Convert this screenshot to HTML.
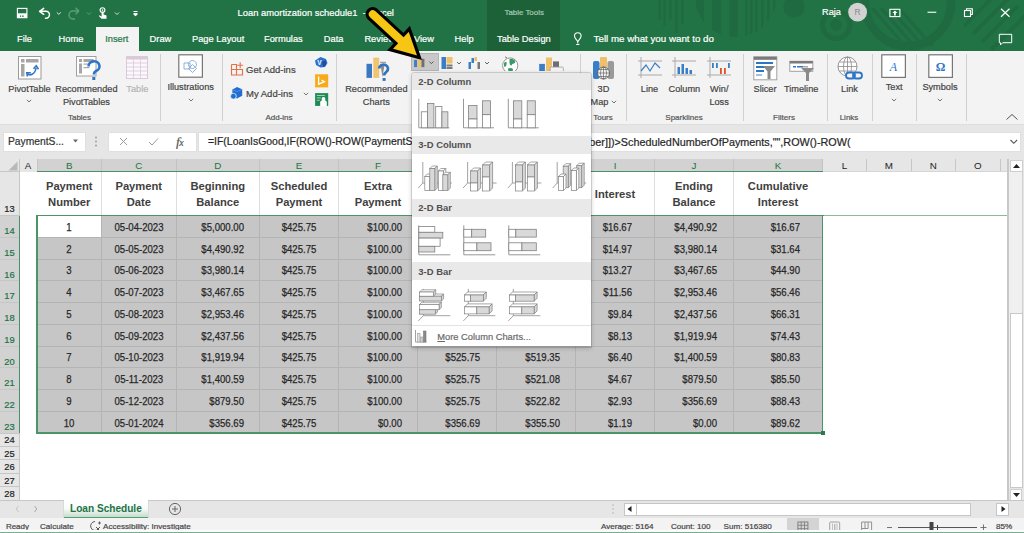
<!DOCTYPE html><html><head><meta charset="utf-8"><style>
html,body{margin:0;padding:0;width:1024px;height:533px;overflow:hidden;background:#fff;}
body{position:relative;font-family:"Liberation Sans",sans-serif;}
.t{position:absolute;white-space:nowrap;}
.n{-webkit-text-stroke:0.2px currentColor;}
.r{position:absolute;}
.s{position:absolute;overflow:visible;}
</style></head><body>
<div class="r" style="left:0px;top:0px;width:1024px;height:51px;background:#217346;"></div>
<div class="r" style="left:487.2px;top:0px;width:73.00000000000006px;height:51px;background:#1d6139;"></div>
<svg class="s" style="left:640px;top:0px;" width="384" height="51" viewBox="0 0 384 51"><rect x="18.5" y="0" width="2.5" height="19.5" fill="#1f6a40"/><rect x="23.399999999999977" y="0" width="2.2000000000000455" height="26.4" fill="#1f6a40"/><rect x="29.299999999999955" y="0" width="2.2000000000000455" height="19.5" fill="#1f6a40"/><rect x="35" y="0" width="2.5" height="33" fill="#1f6a40"/><rect x="41" y="0" width="2.6000000000000227" height="24.4" fill="#1f6a40"/><defs><clipPath id="hc"><circle cx="95.7" cy="-4" r="41"/></clipPath></defs><g clip-path="url(#hc)"><rect x="56" y="0" width="8" height="60" fill="#1f6a40"/><rect x="72" y="0" width="9" height="60" fill="#1f6a40"/><rect x="89.5" y="0" width="8.5" height="60" fill="#1f6a40"/><rect x="105" y="0" width="2.5" height="60" fill="#1f6a40"/><rect x="110" y="0" width="2.5" height="60" fill="#1f6a40"/><rect x="115" y="0" width="2.5" height="60" fill="#1f6a40"/><rect x="121" y="0" width="2.5" height="60" fill="#1f6a40"/><rect x="127" y="0" width="2.5" height="60" fill="#1f6a40"/><rect x="133" y="0" width="2.5" height="60" fill="#1f6a40"/></g><circle cx="154" cy="6.8" r="10.7" fill="#1f6a40"/><circle cx="196.10000000000002" cy="24.9" r="13.6" fill="none" stroke="#1f6a40" stroke-width="5"/><circle cx="196.10000000000002" cy="24.9" r="5.9" fill="#1f6a40"/><circle cx="268" cy="3" r="43" fill="none" stroke="#1f6a40" stroke-width="8.5"/><line x1="232" y1="8" x2="265" y2="46" stroke="#1f6a40" stroke-width="3"/><line x1="241" y1="8" x2="274" y2="46" stroke="#1f6a40" stroke-width="3"/><line x1="250" y1="8" x2="283" y2="46" stroke="#1f6a40" stroke-width="3"/><line x1="259" y1="8" x2="292" y2="46" stroke="#1f6a40" stroke-width="3"/><line x1="324" y1="26" x2="360" y2="-10" stroke="#1f6a40" stroke-width="3.5"/><line x1="333" y1="34" x2="369" y2="-2" stroke="#1f6a40" stroke-width="3.5"/><line x1="342" y1="42" x2="378" y2="6" stroke="#1f6a40" stroke-width="3.5"/><line x1="351" y1="50" x2="387" y2="14" stroke="#1f6a40" stroke-width="3.5"/></svg>
<svg class="s" style="left:15px;top:6px;" width="140" height="16" viewBox="0 0 140 16"><rect x="2.4" y="2.4" width="9.5" height="9.3" fill="none" stroke="#fff" stroke-width="1.1"/><rect x="2.4" y="7.3" width="9.5" height="4.4" fill="#fff"/><rect x="5" y="9.5" width="1.2" height="1.3" fill="#217346"/><rect x="7.2" y="9.5" width="1.5" height="1.3" fill="#217346"/><path d="M24.6 5.3 L28.7 2.4 M24.6 5.3 L28.7 8.3 M24.6 5.3 H31 A3.45 3.45 0 0 1 31 12.2 H30.5" fill="none" stroke="#fff" stroke-width="1.5" stroke-linecap="round"/><path d="M41.8 6.4 l2 1.9 l2 -1.9" fill="none" stroke="#e8e8e8" stroke-width="1"/><path d="M64 5 L60.5 1.8 M64 5 L60.5 8.2 M64 5 H58 A4 4 0 0 0 58 13 H60" fill="none" stroke="#5f9c7a" stroke-width="1.5"/><path d="M72 6.5 l2 2 l2 -2" fill="none" stroke="#5f9c7a" stroke-width="1"/><circle cx="87.5" cy="4.1" r="2.4" fill="none" stroke="#fff" stroke-width="1.1"/><circle cx="87.5" cy="4.1" r="0.8" fill="#fff"/><path d="M86.6 5.5 V10.5 L84.2 9.2 L83.9 10 L86.5 12.8 H91.5 V9.5 L88.6 8.6 V5.5 Z" fill="#fff"/><path d="M100 6.5 l2 2 l2 -2" fill="none" stroke="#e0e0e0" stroke-width="1"/><rect x="118.5" y="5" width="4" height="1" fill="#fff"/><path d="M118.5 7 h4 v1.5 l-2 1.7 l-2 -1.7z" fill="#fff"/></svg>
<div class="t n" style="left:237.60px;top:7.54px;font-size:9.4px;line-height:9.4px;color:#ffffff;font-weight:normal;">Loan amortization schedule1&nbsp; -&nbsp; Excel</div>
<div class="t n" style="left:504.50px;top:8.91px;font-size:7.9px;line-height:7.9px;color:#a9c9b4;font-weight:normal;">Table Tools</div>
<div class="t n" style="left:822.00px;top:7.81px;font-size:9.2px;line-height:9.2px;color:#ffffff;font-weight:normal;">Raja</div>
<svg class="s" style="left:846px;top:2px;" width="24" height="22" viewBox="0 0 24 22"><circle cx="11.6" cy="10.2" r="9.4" fill="#d2d2d2"/><text x="11.6" y="13.3" font-size="8.5" text-anchor="middle" fill="#8a8a8a" font-family="Liberation Sans">R</text></svg>
<svg class="s" style="left:885px;top:5px;" width="135" height="15" viewBox="0 0 135 15"><rect x="4.9" y="4.3" width="10" height="7.3" fill="none" stroke="#fff" stroke-width="1.1"/><path d="M9.9 5.5 l-2.5 2.5 h1.6 v2.5 h1.8 v-2.5 h1.6z" fill="#fff"/><rect x="42.5" y="6.7" width="8.8" height="1.1" fill="#fff"/><rect x="79.5" y="5.5" width="6" height="6" fill="none" stroke="#fff" stroke-width="1.1"/><path d="M81.5 5.5 v-1.8 h5.8 v5.8 h-1.8" fill="none" stroke="#fff" stroke-width="1.1"/><path d="M116 3.8 l8.5 8 M124.5 3.8 l-8.5 8" stroke="#fff" stroke-width="1.2"/></svg>
<svg class="s" style="left:996px;top:31px;" width="18" height="16" viewBox="0 0 18 16"><path d="M3.3 3.3 h12.4 v8.4 h-9 l-2.2 2.2 v-2.2 h-1.2z" fill="none" stroke="#fff" stroke-width="1"/></svg>
<div class="r" style="left:95.5px;top:27px;width:43.0px;height:24px;background:#f3f3f3;border-radius:0"></div>
<div class="t n" style="left:17.00px;top:34.63px;font-size:9.3px;line-height:9.3px;color:#ffffff;font-weight:normal;">File</div>
<div class="t n" style="left:58.50px;top:34.63px;font-size:9.3px;line-height:9.3px;color:#ffffff;font-weight:normal;">Home</div>
<div class="t n" style="left:149.60px;top:34.63px;font-size:9.3px;line-height:9.3px;color:#ffffff;font-weight:normal;">Draw</div>
<div class="t n" style="left:192.00px;top:34.63px;font-size:9.3px;line-height:9.3px;color:#ffffff;font-weight:normal;">Page Layout</div>
<div class="t n" style="left:264.00px;top:34.63px;font-size:9.3px;line-height:9.3px;color:#ffffff;font-weight:normal;">Formulas</div>
<div class="t n" style="left:323.80px;top:34.63px;font-size:9.3px;line-height:9.3px;color:#ffffff;font-weight:normal;">Data</div>
<div class="t n" style="left:364.40px;top:34.63px;font-size:9.3px;line-height:9.3px;color:#ffffff;font-weight:normal;">Review</div>
<div class="t n" style="left:414.00px;top:34.63px;font-size:9.3px;line-height:9.3px;color:#ffffff;font-weight:normal;">View</div>
<div class="t n" style="left:454.60px;top:34.63px;font-size:9.3px;line-height:9.3px;color:#ffffff;font-weight:normal;">Help</div>
<div class="t n" style="left:497.00px;top:34.63px;font-size:9.3px;line-height:9.3px;color:#ffffff;font-weight:normal;">Table Design</div>
<div class="t n" style="left:593.60px;top:34.25px;font-size:9.75px;line-height:9.75px;color:#ffffff;font-weight:normal;">Tell me what you want to do</div>
<div class="t n" style="left:105.20px;top:34.63px;font-size:9.3px;line-height:9.3px;color:#217346;font-weight:normal;">Insert</div>
<svg class="s" style="left:571px;top:31px;" width="14" height="16" viewBox="0 0 14 16"><path d="M6.8 12.5 v-1.5 c0-1.6 -3.3-3.2 -3.3-6 a3.3 3.3 0 0 1 6.6 0 c0 2.8 -3.3 4.4 -3.3 6 v1.5" fill="none" stroke="#fff" stroke-width="1.1"/><rect x="5.2" y="13" width="3.2" height="1" fill="#fff"/></svg>
<div class="r" style="left:0px;top:51px;width:1024px;height:72.5px;background:#f3f3f3;"></div>
<div class="r" style="left:0px;top:123.5px;width:1024px;height:1.0px;background:#dedede;"></div>
<div class="r" style="left:0px;top:124.5px;width:1024px;height:34.5px;background:#e6e6e6;"></div>
<div class="r" style="left:159.7px;top:54px;width:1.0px;height:66.5px;background:#d0d0d0;"></div>
<div class="r" style="left:222.2px;top:54px;width:1.0px;height:66.5px;background:#d0d0d0;"></div>
<div class="r" style="left:336.2px;top:54px;width:1.0px;height:66.5px;background:#d0d0d0;"></div>
<div class="r" style="left:580.2px;top:54px;width:1.0px;height:66.5px;background:#d0d0d0;"></div>
<div class="r" style="left:626.4px;top:54px;width:1.0px;height:66.5px;background:#d0d0d0;"></div>
<div class="r" style="left:742.5px;top:54px;width:1.0px;height:66.5px;background:#d0d0d0;"></div>
<div class="r" style="left:826.6px;top:54px;width:1.0px;height:66.5px;background:#d0d0d0;"></div>
<div class="r" style="left:872.2px;top:54px;width:1.0px;height:66.5px;background:#d0d0d0;"></div>
<div class="r" style="left:915.6px;top:54px;width:1.0px;height:66.5px;background:#d0d0d0;"></div>
<div class="r" style="left:965.6px;top:54px;width:1.0px;height:66.5px;background:#d0d0d0;"></div>
<div class="t n" style="left:-120.50px;width:400px;text-align:center;top:114.13px;font-size:8.0px;line-height:8.0px;color:#555;font-weight:normal;">Tables</div>
<div class="t n" style="left:79.00px;width:400px;text-align:center;top:114.13px;font-size:8.0px;line-height:8.0px;color:#555;font-weight:normal;">Add-ins</div>
<div class="t n" style="left:403.00px;width:400px;text-align:center;top:114.13px;font-size:8.0px;line-height:8.0px;color:#555;font-weight:normal;">Tours</div>
<div class="t n" style="left:484.00px;width:400px;text-align:center;top:114.13px;font-size:8.0px;line-height:8.0px;color:#555;font-weight:normal;">Sparklines</div>
<div class="t n" style="left:584.00px;width:400px;text-align:center;top:114.13px;font-size:8.0px;line-height:8.0px;color:#555;font-weight:normal;">Filters</div>
<div class="t n" style="left:649.00px;width:400px;text-align:center;top:114.13px;font-size:8.0px;line-height:8.0px;color:#555;font-weight:normal;">Links</div>
<div class="t n" style="left:-170.50px;width:400px;text-align:center;top:85.21px;font-size:9.2px;line-height:9.2px;color:#444444;font-weight:normal;">PivotTable</div>
<svg class="s" style="left:26.4px;top:99px;" width="6" height="4" viewBox="0 0 6 4"><path d="M0.8 0.8 L3 3 L5.2 0.8" fill="none" stroke="#666" stroke-width="0.9"/></svg>
<svg class="s" style="left:18px;top:56px;" width="24" height="24" viewBox="0 0 24 24"><rect x="0.5" y="0.5" width="22.5" height="22.5" fill="#fff" stroke="#9a9a9a"/><rect x="3" y="3" width="3.5" height="3.5" fill="#a6a6a6"/><rect x="8" y="3" width="12.5" height="3.5" fill="#a6a6a6"/><rect x="3" y="8" width="3.5" height="12.5" fill="#a6a6a6"/><path d="M9.5 17.5 C11.5 20 17 19 18 12" fill="none" stroke="#2e75c8" stroke-width="1.6"/><path d="M15.5 12.8 L18.2 9.8 L20.5 13.2" fill="none" stroke="#2e75c8" stroke-width="1.6"/><path d="M9.5 20.5 L8.8 16.8 L12.8 16.8" fill="none" stroke="#2e75c8" stroke-width="1.6"/></svg>
<div class="t n" style="left:-113.60px;width:400px;text-align:center;top:85.21px;font-size:9.2px;line-height:9.2px;color:#444444;font-weight:normal;">Recommended</div>
<div class="t n" style="left:-113.60px;width:400px;text-align:center;top:98.31px;font-size:9.2px;line-height:9.2px;color:#444444;font-weight:normal;">PivotTables</div>
<svg class="s" style="left:76px;top:56px;" width="26" height="27" viewBox="0 0 26 27"><rect x="0.5" y="0.5" width="19.5" height="19.5" fill="#fff" stroke="#a0a0a0"/><rect x="3" y="3" width="3" height="3" fill="#a6a6a6"/><rect x="7.5" y="3" width="10" height="3" fill="#a6a6a6"/><rect x="3" y="7.5" width="3" height="10" fill="#a6a6a6"/><rect x="7.5" y="7.5" width="6" height="1.2" fill="#a6a6a6"/><rect x="7.5" y="11" width="6" height="1.2" fill="#a6a6a6"/><path d="M12.5 10.5 a5.5 5 0 1 1 7.5 4.5 c-1.5 0.8 -2.2 1.6 -2.2 3.5" fill="none" stroke="#2e75c8" stroke-width="2.6"/><rect x="16.3" y="21" width="3" height="3" fill="#2e75c8"/></svg>
<div class="t n" style="left:-62.70px;width:400px;text-align:center;top:85.21px;font-size:9.2px;line-height:9.2px;color:#b4b4b4;font-weight:normal;">Table</div>
<svg class="s" style="left:126px;top:56px;" width="23" height="24" viewBox="0 0 23 24"><rect x="0.5" y="0.5" width="21" height="22" fill="#fbf7fb" stroke="#d9c9d9"/><rect x="0.5" y="0.5" width="21" height="3" fill="#d9c9d9"/><line x1="0.5" y1="7" x2="21.5" y2="7" stroke="#dcc8dc" stroke-width="0.8"/><line x1="0.5" y1="11" x2="21.5" y2="11" stroke="#dcc8dc" stroke-width="0.8"/><line x1="0.5" y1="15" x2="21.5" y2="15" stroke="#dcc8dc" stroke-width="0.8"/><line x1="0.5" y1="19" x2="21.5" y2="19" stroke="#dcc8dc" stroke-width="0.8"/><line x1="7.5" y1="0.5" x2="7.5" y2="22.5" stroke="#dcc8dc" stroke-width="0.8"/><line x1="14.5" y1="0.5" x2="14.5" y2="22.5" stroke="#dcc8dc" stroke-width="0.8"/></svg>
<svg class="s" style="left:178px;top:54px;" width="26" height="25" viewBox="0 0 26 25"><rect x="0.8" y="0.8" width="23.6" height="22.4" fill="#fff" stroke="#767676" stroke-width="1.2"/><path d="M6 9 h6 v6 h-6z M14.5 6.5 a4 4 0 1 1 -0.1 0 M10.5 14.5 l4 -4 l4 4 l-4 4z" fill="none" stroke="#7fa7d8" stroke-width="0.9"/></svg>
<div class="t n" style="left:-9.40px;width:400px;text-align:center;top:83.41px;font-size:9.2px;line-height:9.2px;color:#444444;font-weight:normal;">Illustrations</div>
<svg class="s" style="left:188px;top:97.6px;" width="6" height="4" viewBox="0 0 6 4"><path d="M0.8 0.8 L3 3 L5.2 0.8" fill="none" stroke="#666" stroke-width="0.9"/></svg>
<svg class="s" style="left:230px;top:61px;" width="15" height="15" viewBox="0 0 15 15"><path d="M1.5 8.5 v5.5 h11 v-5.5 h-11 M1.5 3.5 h5 v10.5 M1.5 3.5 v5" fill="none" stroke="#e2714a" stroke-width="1.1"/><path d="M10.2 1.2 v6 M7.2 4.2 h6" stroke="#e2714a" stroke-width="1.1"/></svg>
<div class="t n" style="left:246.00px;top:64.96px;font-size:9.5px;line-height:9.5px;color:#444444;font-weight:normal;">Get Add-ins</div>
<svg class="s" style="left:230px;top:86px;" width="14" height="14" viewBox="0 0 14 14"><path d="M7 1 l5.2 2.2 v6.6 l-5.2 2.6 l-4.6 -2.2 v-6.8z" fill="#1e6fd1"/><path d="M2.4 3.4 l4.6 2.2 l5.2 -2.4" fill="none" stroke="#6aa3ea" stroke-width="0.6"/><circle cx="3.4" cy="10.2" r="2.9" fill="#1e6fd1" stroke="#f3f3f3" stroke-width="0.8"/></svg>
<div class="t n" style="left:246.00px;top:88.96px;font-size:9.5px;line-height:9.5px;color:#444444;font-weight:normal;">My Add-ins</div>
<svg class="s" style="left:303px;top:92px;" width="6" height="4" viewBox="0 0 6 4"><path d="M0.8 0.8 L3 3 L5.2 0.8" fill="none" stroke="#666" stroke-width="0.9"/></svg>
<svg class="s" style="left:314px;top:56px;" width="15" height="51" viewBox="0 0 15 51"><path d="M6.5 1 l5.5 2 l1.5 4 l-2.5 4 l-4.5 0.5 l-4.5 -2.5 l-1 -4.5z" fill="#2b6fd0"/><path d="M8 6 l4 -2 v5 l-3 2z" fill="#1d4f9e"/><text x="5.3" y="8.8" font-size="6.5" font-weight="bold" fill="#fff" font-family="Liberation Sans" text-anchor="middle">V</text><rect x="1.1" y="18.3" width="13.1" height="13.1" fill="#f7ab1b"/><path d="M4.6 20.6 v7.6 l5.8 -2.6 l-3 -1.6" fill="none" stroke="#fff" stroke-width="1.3"/><rect x="1.1" y="37.1" width="13.1" height="12.8" fill="#1f8a55"/><circle cx="9.5" cy="43" r="1.9" fill="#fff"/><path d="M6.2 49.9 v-3.3 a3.3 2.6 0 0 1 6.6 0 v3.3z" fill="#fff"/><rect x="2.8" y="39.2" width="8" height="0.8" fill="#bfe0cc"/><rect x="2.8" y="41.5" width="4" height="0.8" fill="#bfe0cc"/><rect x="2.8" y="43.8" width="3" height="0.8" fill="#bfe0cc"/></svg>
<svg class="s" style="left:365px;top:56px;" width="26" height="26" viewBox="0 0 26 26"><rect x="1.5" y="7.8" width="5.5" height="14.1" fill="#3a78c2"/><rect x="8.3" y="1.6" width="5.9" height="20.3" fill="#efc473"/><rect x="15" y="5.8" width="6" height="1" fill="#8a8a8a"/><path d="M15.5 9 l4 0 l-2 12z" fill="#8a8a8a"/><path d="M14.2 12.6 a4.4 4.1 0 1 1 7.2 3.2 c-1.6 1.1 -2.3 1.9 -2.3 3.7" fill="none" stroke="#3273c0" stroke-width="2.7"/><rect x="17.6" y="22" width="3" height="2.9" fill="#3273c0"/></svg>
<div class="t n" style="left:176.40px;width:400px;text-align:center;top:85.21px;font-size:9.2px;line-height:9.2px;color:#444444;font-weight:normal;">Recommended</div>
<div class="t n" style="left:176.40px;width:400px;text-align:center;top:98.31px;font-size:9.2px;line-height:9.2px;color:#444444;font-weight:normal;">Charts</div>
<div class="r" style="left:410.9px;top:53.2px;width:27.700000000000045px;height:18.0px;background:#c8c8c8;box-sizing:border-box;border:1px solid #b4b4b4"></div>
<svg class="s" style="left:413px;top:56px;" width="24" height="14" viewBox="0 0 24 14"><rect x="1.1" y="3.9" width="2.9" height="7.2" fill="#3a7ec7"/><rect x="4.7" y="0" width="3.3" height="11.1" fill="#efc06a"/><rect x="8.5" y="2.8" width="2.9" height="8.3" fill="#6f6f6f"/><path d="M16.4 5.6 l2 2 l2 -2" fill="none" stroke="#555" stroke-width="1"/></svg>
<svg class="s" style="left:440px;top:56px;" width="52" height="15" viewBox="0 0 52 15"><rect x="1.5" y="1" width="4.5" height="12" fill="#3a7ec7"/><rect x="6.5" y="1" width="6" height="6.5" fill="#efc06a"/><rect x="6.5" y="8.5" width="6" height="2" fill="#7a7a7a"/><rect x="6.5" y="11" width="6" height="2" fill="#7a7a7a"/><path d="M17 6 l2 2 l2 -2" fill="none" stroke="#555" stroke-width="0.9"/><rect x="28.5" y="6" width="2.5" height="7" fill="#3a7ec7"/><rect x="31.5" y="2" width="2.5" height="5" fill="#3a7ec7"/><rect x="34.5" y="1" width="2.5" height="4" fill="#efc06a"/><rect x="37.5" y="6" width="2.5" height="7" fill="#7a7a7a"/><path d="M45 6 l2 2 l2 -2" fill="none" stroke="#555" stroke-width="0.9"/></svg>
<svg class="s" style="left:500px;top:55px;" width="65" height="17" viewBox="0 0 65 17"><defs><clipPath id="gl"><rect x="0" y="0" width="65" height="16"/></clipPath></defs><g clip-path="url(#gl)"><circle cx="10.2" cy="10.5" r="7.6" fill="#fff" stroke="#8a8a8a" stroke-width="0.9"/><path d="M5 1.8 l2 1.2" stroke="#555" stroke-width="0.8"/><path d="M9.5 4 q3 -1 5.5 1.5 q1 2 -1 3 q-2 0 -2.5 2 q-2 0 -2 -2.5z M4 8 q1 -1.5 2.5 -1 q0.5 2 -0.5 4 q-1 1 -2 0.5z M8 13.5 q3 -1 5 0.5 l-0.5 3 h-4z" fill="#3c9a6a"/><rect x="39.2" y="8.9" width="5.7" height="8" fill="#3a7ec7"/><rect x="46" y="2.5" width="6" height="14" fill="#efc06a"/><rect x="53" y="6.4" width="6" height="8" fill="#6f6f6f"/><rect x="50.2" y="12.1" width="13.2" height="5" rx="1" fill="#f3f3f3" stroke="#a0a0a0" stroke-width="0.8"/></g></svg>
<svg class="s" style="left:592px;top:56px;" width="24" height="25" viewBox="0 0 24 25"><rect x="1" y="5" width="6.5" height="18" rx="2" fill="#3a7ec7"/><rect x="8" y="1" width="7" height="18" rx="1" fill="#efc06a"/><rect x="15.5" y="5" width="6.5" height="18" rx="2" fill="#9a9a9a"/><circle cx="11.5" cy="17" r="6" fill="#f3f3f3" stroke="#555" stroke-width="0.8"/><path d="M5.5 17 h12 M11.5 11 v12 M7 13.5 h9 M7 20.5 h9" stroke="#555" stroke-width="0.6"/><ellipse cx="11.5" cy="17" rx="3" ry="6" fill="none" stroke="#555" stroke-width="0.6"/></svg>
<div class="t n" style="left:403.40px;width:400px;text-align:center;top:85.21px;font-size:9.2px;line-height:9.2px;color:#444444;font-weight:normal;">3D</div>
<div class="t n" style="left:399.50px;width:400px;text-align:center;top:98.31px;font-size:9.2px;line-height:9.2px;color:#444444;font-weight:normal;">Map</div>
<svg class="s" style="left:611.4px;top:99.8px;" width="6" height="4" viewBox="0 0 6 4"><path d="M0.8 0.8 L3 3 L5.2 0.8" fill="none" stroke="#666" stroke-width="0.9"/></svg>
<svg class="s" style="left:637px;top:56px;" width="26" height="23" viewBox="0 0 26 23"><line x1="1" y1="5" x2="25" y2="5" stroke="#aaa"/><line x1="1" y1="19" x2="25" y2="19" stroke="#aaa"/><line x1="4" y1="1" x2="4" y2="22" stroke="#aaa"/><path d="M4 15 L9 9 L13 15 L18 7 L23 12" fill="none" stroke="#3a7ec7" stroke-width="1.2"/></svg>
<div class="t n" style="left:449.50px;width:400px;text-align:center;top:85.21px;font-size:9.2px;line-height:9.2px;color:#444444;font-weight:normal;">Line</div>
<svg class="s" style="left:671px;top:56px;" width="26" height="23" viewBox="0 0 26 23"><line x1="1" y1="5" x2="25" y2="5" stroke="#aaa"/><line x1="1" y1="19" x2="25" y2="19" stroke="#aaa"/><line x1="4" y1="1" x2="4" y2="22" stroke="#aaa"/><rect x="6.5" y="11" width="2.5" height="7" fill="#3a7ec7"/><rect x="10.5" y="8" width="2.5" height="10" fill="#3a7ec7"/><rect x="14.5" y="12" width="2.5" height="6" fill="#3a7ec7"/><rect x="18.5" y="14" width="2.5" height="4" fill="#3a7ec7"/></svg>
<div class="t n" style="left:484.40px;width:400px;text-align:center;top:85.21px;font-size:9.2px;line-height:9.2px;color:#444444;font-weight:normal;">Column</div>
<svg class="s" style="left:706px;top:56px;" width="26" height="23" viewBox="0 0 26 23"><line x1="1" y1="5" x2="25" y2="5" stroke="#aaa"/><line x1="1" y1="19" x2="25" y2="19" stroke="#aaa"/><line x1="4" y1="1" x2="4" y2="22" stroke="#aaa"/><rect x="6" y="7" width="1.8" height="5" fill="#3a7ec7"/><rect x="10" y="7" width="1.8" height="5" fill="#3a7ec7"/><rect x="14" y="12" width="1.8" height="6" fill="#e0502b"/><rect x="18" y="12" width="1.8" height="6" fill="#e0502b"/><rect x="22" y="7" width="1.8" height="5" fill="#3a7ec7"/></svg>
<div class="t n" style="left:519.30px;width:400px;text-align:center;top:85.21px;font-size:9.2px;line-height:9.2px;color:#444444;font-weight:normal;">Win/</div>
<div class="t n" style="left:519.10px;width:400px;text-align:center;top:98.31px;font-size:9.2px;line-height:9.2px;color:#444444;font-weight:normal;">Loss</div>
<svg class="s" style="left:753px;top:56px;" width="25" height="25" viewBox="0 0 25 25"><rect x="0.8" y="0.8" width="23" height="23" fill="#fff" stroke="#a0a0a0"/><rect x="0.8" y="0.8" width="23" height="3" fill="#7a7a7a"/><rect x="3" y="6" width="17" height="2" fill="#2e75c8"/><rect x="3" y="10" width="10" height="2" fill="#2e75c8"/><rect x="3" y="14" width="8" height="2" fill="#2e75c8"/><rect x="3" y="18" width="6" height="2" fill="#9cc0e8"/><path d="M10 10 h12 l-4.5 5.5 v7.5 h-3 v-7.5z" fill="#8a8a8a"/></svg>
<div class="t n" style="left:565.00px;width:400px;text-align:center;top:85.21px;font-size:9.2px;line-height:9.2px;color:#444444;font-weight:normal;">Slicer</div>
<svg class="s" style="left:789px;top:60px;" width="26" height="22" viewBox="0 0 26 22"><rect x="0.8" y="1.3" width="23" height="10" fill="#fff" stroke="#a0a0a0"/><rect x="0.8" y="1" width="23" height="2.5" fill="#7a7a7a"/><rect x="4" y="6" width="3" height="1.5" fill="#2e75c8"/><rect x="8" y="6" width="6" height="1.5" fill="#2e75c8"/><rect x="14" y="6" width="5" height="1.5" fill="#aaa"/><path d="M12 8 h13 l-5 5 v8 h-3 v-8z" fill="#8a8a8a"/></svg>
<div class="t n" style="left:601.20px;width:400px;text-align:center;top:85.21px;font-size:9.2px;line-height:9.2px;color:#444444;font-weight:normal;">Timeline</div>
<svg class="s" style="left:837px;top:56px;" width="27" height="26" viewBox="0 0 27 26"><circle cx="10.5" cy="10.5" r="9.5" fill="#fff" stroke="#8a8a8a" stroke-width="0.9"/><ellipse cx="10.5" cy="10.5" rx="4" ry="9.5" fill="none" stroke="#8a8a8a" stroke-width="0.8"/><path d="M1 10.5 h19 M2.5 6 h16 M2.5 15 h16 M10.5 1 v19" stroke="#8a8a8a" stroke-width="0.8"/><rect x="9" y="16.5" width="9" height="6" rx="3" fill="#f3f3f3" stroke="#2e75c8" stroke-width="1.8"/><rect x="16" y="16.5" width="9" height="6" rx="3" fill="none" stroke="#2e75c8" stroke-width="1.8"/></svg>
<div class="t n" style="left:649.50px;width:400px;text-align:center;top:85.21px;font-size:9.2px;line-height:9.2px;color:#444444;font-weight:normal;">Link</div>
<svg class="s" style="left:881px;top:54px;" width="26" height="25" viewBox="0 0 26 25"><rect x="0.8" y="0.8" width="23.6" height="22.6" fill="#fff" stroke="#767676" stroke-width="1.2"/><text x="12.5" y="16.5" font-size="12" font-style="italic" fill="#2e75c8" font-family="Liberation Serif" text-anchor="middle">A</text></svg>
<div class="t n" style="left:694.20px;width:400px;text-align:center;top:83.41px;font-size:9.2px;line-height:9.2px;color:#444444;font-weight:normal;">Text</div>
<svg class="s" style="left:890.7px;top:97.6px;" width="6" height="4" viewBox="0 0 6 4"><path d="M0.8 0.8 L3 3 L5.2 0.8" fill="none" stroke="#666" stroke-width="0.9"/></svg>
<svg class="s" style="left:927.5px;top:54px;" width="26" height="25" viewBox="0 0 26 25"><rect x="0.8" y="0.8" width="23.6" height="22.6" fill="#fff" stroke="#767676" stroke-width="1.2"/><text x="12.5" y="16.5" font-size="12" font-weight="bold" fill="#2e75c8" font-family="Liberation Serif" text-anchor="middle">&#937;</text></svg>
<div class="t n" style="left:740.00px;width:400px;text-align:center;top:83.41px;font-size:9.2px;line-height:9.2px;color:#444444;font-weight:normal;">Symbols</div>
<svg class="s" style="left:937.2px;top:97.6px;" width="6" height="4" viewBox="0 0 6 4"><path d="M0.8 0.8 L3 3 L5.2 0.8" fill="none" stroke="#666" stroke-width="0.9"/></svg>
<svg class="s" style="left:1005px;top:113px;" width="14" height="8" viewBox="0 0 14 8"><path d="M1.5 6.5 L7 1.5 L12.5 6.5" fill="none" stroke="#555" stroke-width="1"/></svg>
<div class="r" style="left:4px;top:133px;width:80.5px;height:17.5px;background:#fff;box-shadow:0 0 0 0.5px #d8d8d8"></div>
<div class="t n" style="left:7.90px;top:136.78px;font-size:10.3px;line-height:10.3px;color:#333;font-weight:normal;">PaymentS...</div>
<svg class="s" style="left:72px;top:138px;" width="8" height="6" viewBox="0 0 8 6"><path d="M1 1.5 h5 l-2.5 3z" fill="#666"/></svg>
<svg class="s" style="left:94px;top:136px;" width="4" height="11" viewBox="0 0 4 11"><circle cx="2" cy="1.5" r="0.9" fill="#999"/><circle cx="2" cy="5.5" r="0.9" fill="#999"/><circle cx="2" cy="9.5" r="0.9" fill="#999"/></svg>
<div class="r" style="left:109px;top:132.5px;width:87px;height:18.0px;background:#fff;box-shadow:0 0 0 0.5px #d8d8d8"></div>
<svg class="s" style="left:118px;top:136px;" width="75" height="12" viewBox="0 0 75 12"><path d="M2 2 l7 7 M9 2 l-7 7" stroke="#9a9a9a" stroke-width="1"/><path d="M31 6 l3 3 l6 -6.5" fill="none" stroke="#9a9a9a" stroke-width="1"/></svg>
<div class="t n" style="left:176.00px;top:134.87px;font-size:13.5px;line-height:13.5px;color:#555;font-weight:normal;font-family:Liberation Serif,serif;letter-spacing:-0.5px"><i>f</i><i style="font-size:10px;letter-spacing:0">x</i></div>
<div class="r" style="left:198.5px;top:132.5px;width:821.5px;height:18.0px;background:#fff;box-shadow:0 0 0 0.5px #d8d8d8"></div>
<div class="t n" style="left:208.00px;top:137.35px;font-size:10.45px;line-height:10.45px;color:#262626;font-weight:normal;">=IF(LoanIsGood,IF(ROW()-ROW(PaymentSchedule[[#Headers],[PaymentNum</div>
<div class="t n" style="left:450.50px;width:400px;text-align:right;top:137.06px;font-size:10.8px;line-height:10.8px;color:#262626;font-weight:normal;">ber]])&gt;ScheduledNumberOfPayments,"",ROW()-ROW(</div>
<svg class="s" style="left:1008.5px;top:137.5px;" width="10" height="8" viewBox="0 0 10 8"><path d="M1.5 2 l3.3 3.3 l3.3 -3.3" fill="none" stroke="#555" stroke-width="1.1"/></svg>
<div class="r" style="left:19px;top:172px;width:988px;height:328px;background:#fff;"></div>
<div class="r" style="left:0px;top:159px;width:1007px;height:13px;background:#e6e6e6;"></div>
<div class="r" style="left:37px;top:159px;width:785.5px;height:13px;background:#d2d2d2;"></div>
<svg class="s" style="left:0px;top:159px;" width="19" height="13" viewBox="0 0 19 13"><path d="M17.5 2.5 V11.5 H8.5z" fill="#b8b8b8"/></svg>
<div class="r" style="left:36.5px;top:159px;width:1.0px;height:13px;background:#c6c6c6;"></div>
<div class="t" style="left:-172.00px;width:400px;text-align:center;top:161.00px;font-size:9.8px;line-height:9.8px;color:#222;font-weight:400;">A</div>
<div class="r" style="left:101.0px;top:159px;width:1.0px;height:13px;background:#c3c3c3;"></div>
<div class="t" style="left:-130.75px;width:400px;text-align:center;top:161.00px;font-size:9.8px;line-height:9.8px;color:#217346;font-weight:400;">B</div>
<div class="r" style="left:175.5px;top:159px;width:1.0px;height:13px;background:#c3c3c3;"></div>
<div class="t" style="left:-61.25px;width:400px;text-align:center;top:161.00px;font-size:9.8px;line-height:9.8px;color:#217346;font-weight:400;">C</div>
<div class="r" style="left:259.0px;top:159px;width:1.0px;height:13px;background:#c3c3c3;"></div>
<div class="t" style="left:17.75px;width:400px;text-align:center;top:161.00px;font-size:9.8px;line-height:9.8px;color:#217346;font-weight:400;">D</div>
<div class="r" style="left:338.0px;top:159px;width:1.0px;height:13px;background:#c3c3c3;"></div>
<div class="t" style="left:99.00px;width:400px;text-align:center;top:161.00px;font-size:9.8px;line-height:9.8px;color:#217346;font-weight:400;">E</div>
<div class="r" style="left:417.0px;top:159px;width:1.0px;height:13px;background:#c3c3c3;"></div>
<div class="t" style="left:178.00px;width:400px;text-align:center;top:161.00px;font-size:9.8px;line-height:9.8px;color:#217346;font-weight:400;">F</div>
<div class="r" style="left:495.5px;top:159px;width:1.0px;height:13px;background:#c3c3c3;"></div>
<div class="t" style="left:256.75px;width:400px;text-align:center;top:161.00px;font-size:9.8px;line-height:9.8px;color:#217346;font-weight:400;">G</div>
<div class="r" style="left:575.0px;top:159px;width:1.0px;height:13px;background:#c3c3c3;"></div>
<div class="t" style="left:335.75px;width:400px;text-align:center;top:161.00px;font-size:9.8px;line-height:9.8px;color:#217346;font-weight:400;">H</div>
<div class="r" style="left:654.0px;top:159px;width:1.0px;height:13px;background:#c3c3c3;"></div>
<div class="t" style="left:415.00px;width:400px;text-align:center;top:161.00px;font-size:9.8px;line-height:9.8px;color:#217346;font-weight:400;">I</div>
<div class="r" style="left:733.0px;top:159px;width:1.0px;height:13px;background:#c3c3c3;"></div>
<div class="t" style="left:494.00px;width:400px;text-align:center;top:161.00px;font-size:9.8px;line-height:9.8px;color:#217346;font-weight:400;">J</div>
<div class="r" style="left:822.0px;top:159px;width:1.0px;height:13px;background:#c3c3c3;"></div>
<div class="t" style="left:578.00px;width:400px;text-align:center;top:161.00px;font-size:9.8px;line-height:9.8px;color:#217346;font-weight:400;">K</div>
<div class="r" style="left:866.0px;top:159px;width:1.0px;height:13px;background:#c6c6c6;"></div>
<div class="t" style="left:644.50px;width:400px;text-align:center;top:161.00px;font-size:9.8px;line-height:9.8px;color:#222;font-weight:400;">L</div>
<div class="r" style="left:910.5px;top:159px;width:1.0px;height:13px;background:#c6c6c6;"></div>
<div class="t" style="left:688.75px;width:400px;text-align:center;top:161.00px;font-size:9.8px;line-height:9.8px;color:#222;font-weight:400;">M</div>
<div class="r" style="left:955.0px;top:159px;width:1.0px;height:13px;background:#c6c6c6;"></div>
<div class="t" style="left:733.25px;width:400px;text-align:center;top:161.00px;font-size:9.8px;line-height:9.8px;color:#222;font-weight:400;">N</div>
<div class="r" style="left:999.5px;top:159px;width:1.0px;height:13px;background:#c6c6c6;"></div>
<div class="t" style="left:777.75px;width:400px;text-align:center;top:161.00px;font-size:9.8px;line-height:9.8px;color:#222;font-weight:400;">O</div>
<div class="t" style="left:822.50px;width:400px;text-align:center;top:161.00px;font-size:9.8px;line-height:9.8px;color:#222;font-weight:400;">P</div>
<div class="r" style="left:18.5px;top:159px;width:1.0px;height:13px;background:#c6c6c6;"></div>
<div class="r" style="left:0px;top:171px;width:19px;height:1px;background:#c8c8c8;"></div>
<div class="r" style="left:822.5px;top:171px;width:184.5px;height:1px;background:#d6d6d6;"></div>
<div class="r" style="left:37px;top:171px;width:785.5px;height:1.1999999999999886px;background:#4a9065;"></div>
<div class="r" style="left:0px;top:172px;width:19px;height:328px;background:#e6e6e6;"></div>
<div class="r" style="left:0px;top:215.5px;width:19px;height:217.5px;background:#d2d2d2;"></div>
<div class="r" style="left:0px;top:215.0px;width:19px;height:1.0px;background:#c6c6c6;"></div>
<div class="t n" style="left:-190.50px;width:400px;text-align:center;top:205.43px;font-size:9.3px;line-height:9.3px;color:#222;font-weight:normal;">13</div>
<div class="r" style="left:0px;top:236.75px;width:19px;height:1.0px;background:#c6c6c6;"></div>
<div class="t n" style="left:-190.50px;width:400px;text-align:center;top:227.18px;font-size:9.3px;line-height:9.3px;color:#217346;font-weight:normal;">14</div>
<div class="r" style="left:0px;top:258.5px;width:19px;height:1.0px;background:#c6c6c6;"></div>
<div class="t n" style="left:-190.50px;width:400px;text-align:center;top:248.93px;font-size:9.3px;line-height:9.3px;color:#217346;font-weight:normal;">15</div>
<div class="r" style="left:0px;top:280.25px;width:19px;height:1.0px;background:#c6c6c6;"></div>
<div class="t n" style="left:-190.50px;width:400px;text-align:center;top:270.68px;font-size:9.3px;line-height:9.3px;color:#217346;font-weight:normal;">16</div>
<div class="r" style="left:0px;top:302.0px;width:19px;height:1.0px;background:#c6c6c6;"></div>
<div class="t n" style="left:-190.50px;width:400px;text-align:center;top:292.43px;font-size:9.3px;line-height:9.3px;color:#217346;font-weight:normal;">17</div>
<div class="r" style="left:0px;top:323.75px;width:19px;height:1.0px;background:#c6c6c6;"></div>
<div class="t n" style="left:-190.50px;width:400px;text-align:center;top:314.18px;font-size:9.3px;line-height:9.3px;color:#217346;font-weight:normal;">18</div>
<div class="r" style="left:0px;top:345.5px;width:19px;height:1.0px;background:#c6c6c6;"></div>
<div class="t n" style="left:-190.50px;width:400px;text-align:center;top:335.93px;font-size:9.3px;line-height:9.3px;color:#217346;font-weight:normal;">19</div>
<div class="r" style="left:0px;top:367.25px;width:19px;height:1.0px;background:#c6c6c6;"></div>
<div class="t n" style="left:-190.50px;width:400px;text-align:center;top:357.68px;font-size:9.3px;line-height:9.3px;color:#217346;font-weight:normal;">20</div>
<div class="r" style="left:0px;top:389.0px;width:19px;height:1.0px;background:#c6c6c6;"></div>
<div class="t n" style="left:-190.50px;width:400px;text-align:center;top:379.43px;font-size:9.3px;line-height:9.3px;color:#217346;font-weight:normal;">21</div>
<div class="r" style="left:0px;top:410.75px;width:19px;height:1.0px;background:#c6c6c6;"></div>
<div class="t n" style="left:-190.50px;width:400px;text-align:center;top:401.18px;font-size:9.3px;line-height:9.3px;color:#217346;font-weight:normal;">22</div>
<div class="r" style="left:0px;top:432.5px;width:19px;height:1.0px;background:#c6c6c6;"></div>
<div class="t n" style="left:-190.50px;width:400px;text-align:center;top:422.93px;font-size:9.3px;line-height:9.3px;color:#217346;font-weight:normal;">23</div>
<div class="r" style="left:0px;top:445.9px;width:19px;height:1.0px;background:#c6c6c6;"></div>
<div class="t n" style="left:-190.50px;width:400px;text-align:center;top:436.33px;font-size:9.3px;line-height:9.3px;color:#222;font-weight:normal;">24</div>
<div class="r" style="left:0px;top:459.29999999999995px;width:19px;height:1.0px;background:#c6c6c6;"></div>
<div class="t n" style="left:-190.50px;width:400px;text-align:center;top:449.73px;font-size:9.3px;line-height:9.3px;color:#222;font-weight:normal;">25</div>
<div class="r" style="left:0px;top:472.69999999999993px;width:19px;height:1.0px;background:#c6c6c6;"></div>
<div class="t n" style="left:-190.50px;width:400px;text-align:center;top:463.13px;font-size:9.3px;line-height:9.3px;color:#222;font-weight:normal;">26</div>
<div class="r" style="left:0px;top:486.0999999999999px;width:19px;height:1.0px;background:#c6c6c6;"></div>
<div class="t n" style="left:-190.50px;width:400px;text-align:center;top:476.53px;font-size:9.3px;line-height:9.3px;color:#222;font-weight:normal;">27</div>
<div class="r" style="left:0px;top:499.4999999999999px;width:19px;height:1.0px;background:#c6c6c6;"></div>
<div class="t n" style="left:-190.50px;width:400px;text-align:center;top:489.93px;font-size:9.3px;line-height:9.3px;color:#222;font-weight:normal;">28</div>
<div class="r" style="left:18.8px;top:215.5px;width:1.1999999999999993px;height:217.5px;background:#4a9065;"></div>
<div class="r" style="left:18.5px;top:172px;width:1.0px;height:43.5px;background:#c6c6c6;"></div>
<div class="r" style="left:18.5px;top:433px;width:1.0px;height:67px;background:#c6c6c6;"></div>
<div class="r" style="left:101.0px;top:172px;width:1.0px;height:43.5px;background:#dedede;"></div>
<div class="r" style="left:175.5px;top:172px;width:1.0px;height:43.5px;background:#dedede;"></div>
<div class="r" style="left:259.0px;top:172px;width:1.0px;height:43.5px;background:#dedede;"></div>
<div class="r" style="left:338.0px;top:172px;width:1.0px;height:43.5px;background:#dedede;"></div>
<div class="r" style="left:417.0px;top:172px;width:1.0px;height:43.5px;background:#dedede;"></div>
<div class="r" style="left:495.5px;top:172px;width:1.0px;height:43.5px;background:#dedede;"></div>
<div class="r" style="left:575.0px;top:172px;width:1.0px;height:43.5px;background:#dedede;"></div>
<div class="r" style="left:654.0px;top:172px;width:1.0px;height:43.5px;background:#dedede;"></div>
<div class="r" style="left:733.0px;top:172px;width:1.0px;height:43.5px;background:#dedede;"></div>
<div class="r" style="left:823px;top:215px;width:184px;height:1px;background:#8cb89c;"></div>
<div class="r" style="left:37px;top:215.5px;width:785.5px;height:217.5px;background:#c6c6c6;"></div>
<div class="r" style="left:37px;top:215.5px;width:64.5px;height:21.75px;background:#fff;"></div>
<div class="r" style="left:101.0px;top:215.5px;width:1.0px;height:217.5px;background:#b4b4b4;"></div>
<div class="r" style="left:175.5px;top:215.5px;width:1.0px;height:217.5px;background:#b4b4b4;"></div>
<div class="r" style="left:259.0px;top:215.5px;width:1.0px;height:217.5px;background:#b4b4b4;"></div>
<div class="r" style="left:338.0px;top:215.5px;width:1.0px;height:217.5px;background:#b4b4b4;"></div>
<div class="r" style="left:417.0px;top:215.5px;width:1.0px;height:217.5px;background:#b4b4b4;"></div>
<div class="r" style="left:495.5px;top:215.5px;width:1.0px;height:217.5px;background:#b4b4b4;"></div>
<div class="r" style="left:575.0px;top:215.5px;width:1.0px;height:217.5px;background:#b4b4b4;"></div>
<div class="r" style="left:654.0px;top:215.5px;width:1.0px;height:217.5px;background:#b4b4b4;"></div>
<div class="r" style="left:733.0px;top:215.5px;width:1.0px;height:217.5px;background:#b4b4b4;"></div>
<div class="r" style="left:37px;top:236.75px;width:785.5px;height:1.0px;background:#b4b4b4;"></div>
<div class="r" style="left:37px;top:258.5px;width:785.5px;height:1.0px;background:#b4b4b4;"></div>
<div class="r" style="left:37px;top:280.25px;width:785.5px;height:1.0px;background:#b4b4b4;"></div>
<div class="r" style="left:37px;top:302.0px;width:785.5px;height:1.0px;background:#b4b4b4;"></div>
<div class="r" style="left:37px;top:323.75px;width:785.5px;height:1.0px;background:#b4b4b4;"></div>
<div class="r" style="left:37px;top:345.5px;width:785.5px;height:1.0px;background:#b4b4b4;"></div>
<div class="r" style="left:37px;top:367.25px;width:785.5px;height:1.0px;background:#b4b4b4;"></div>
<div class="r" style="left:37px;top:389.0px;width:785.5px;height:1.0px;background:#b4b4b4;"></div>
<div class="r" style="left:37px;top:410.75px;width:785.5px;height:1.0px;background:#b4b4b4;"></div>
<div class="r" style="left:36px;top:214.8px;width:787.5px;height:1.6999999999999886px;background:#4a9467;"></div>
<div class="r" style="left:36px;top:214.8px;width:1.7000000000000028px;height:219.2px;background:#4a9467;"></div>
<div class="r" style="left:821.8px;top:214.8px;width:1.7000000000000455px;height:219.2px;background:#4a9467;"></div>
<div class="r" style="left:36px;top:432.3px;width:787.5px;height:1.6999999999999886px;background:#4a9467;"></div>
<div class="r" style="left:821.3px;top:431.3px;width:3.400000000000091px;height:3.3999999999999773px;background:#2a7a4c;"></div>
<div class="t" style="left:-130.75px;width:400px;text-align:center;top:180.72px;font-size:11.2px;line-height:11.2px;color:#404040;font-weight:bold;">Payment</div>
<div class="t" style="left:-130.75px;width:400px;text-align:center;top:196.82px;font-size:11.2px;line-height:11.2px;color:#404040;font-weight:bold;">Number</div>
<div class="t" style="left:-61.25px;width:400px;text-align:center;top:180.72px;font-size:11.2px;line-height:11.2px;color:#404040;font-weight:bold;">Payment</div>
<div class="t" style="left:-61.25px;width:400px;text-align:center;top:196.82px;font-size:11.2px;line-height:11.2px;color:#404040;font-weight:bold;">Date</div>
<div class="t" style="left:17.75px;width:400px;text-align:center;top:180.72px;font-size:11.2px;line-height:11.2px;color:#404040;font-weight:bold;">Beginning</div>
<div class="t" style="left:17.75px;width:400px;text-align:center;top:196.82px;font-size:11.2px;line-height:11.2px;color:#404040;font-weight:bold;">Balance</div>
<div class="t" style="left:99.00px;width:400px;text-align:center;top:180.72px;font-size:11.2px;line-height:11.2px;color:#404040;font-weight:bold;">Scheduled</div>
<div class="t" style="left:99.00px;width:400px;text-align:center;top:196.82px;font-size:11.2px;line-height:11.2px;color:#404040;font-weight:bold;">Payment</div>
<div class="t" style="left:178.00px;width:400px;text-align:center;top:180.72px;font-size:11.2px;line-height:11.2px;color:#404040;font-weight:bold;">Extra</div>
<div class="t" style="left:178.00px;width:400px;text-align:center;top:196.82px;font-size:11.2px;line-height:11.2px;color:#404040;font-weight:bold;">Payment</div>
<div class="t" style="left:256.75px;width:400px;text-align:center;top:180.72px;font-size:11.2px;line-height:11.2px;color:#404040;font-weight:bold;">Total</div>
<div class="t" style="left:256.75px;width:400px;text-align:center;top:196.82px;font-size:11.2px;line-height:11.2px;color:#404040;font-weight:bold;">Payment</div>
<div class="t" style="left:335.75px;width:400px;text-align:center;top:188.52px;font-size:11.2px;line-height:11.2px;color:#404040;font-weight:bold;">Principal</div>
<div class="t" style="left:415.00px;width:400px;text-align:center;top:188.52px;font-size:11.2px;line-height:11.2px;color:#404040;font-weight:bold;">Interest</div>
<div class="t" style="left:494.00px;width:400px;text-align:center;top:180.72px;font-size:11.2px;line-height:11.2px;color:#404040;font-weight:bold;">Ending</div>
<div class="t" style="left:494.00px;width:400px;text-align:center;top:196.82px;font-size:11.2px;line-height:11.2px;color:#404040;font-weight:bold;">Balance</div>
<div class="t" style="left:578.00px;width:400px;text-align:center;top:180.72px;font-size:11.2px;line-height:11.2px;color:#404040;font-weight:bold;">Cumulative</div>
<div class="t" style="left:578.00px;width:400px;text-align:center;top:196.82px;font-size:11.2px;line-height:11.2px;color:#404040;font-weight:bold;">Interest</div>
<div class="t n" style="left:-130.75px;width:400px;text-align:center;transform:scaleX(0.8275862068965517);transform-origin:center 50%;-webkit-text-stroke:0.25px currentColor;top:220.83px;font-size:11.6px;line-height:11.6px;color:#262626;font-weight:normal;">1</div>
<div class="t n" style="left:-61.25px;width:400px;text-align:center;transform:scaleX(0.8275862068965517);transform-origin:center 50%;-webkit-text-stroke:0.25px currentColor;top:220.83px;font-size:11.6px;line-height:11.6px;color:#262626;font-weight:normal;">05-04-2023</div>
<div class="t n" style="left:-156.20px;width:400px;text-align:right;transform:scaleX(0.8275862068965517);transform-origin:right 50%;-webkit-text-stroke:0.25px currentColor;top:220.83px;font-size:11.6px;line-height:11.6px;color:#262626;font-weight:normal;">$5,000.00</div>
<div class="t n" style="left:99.00px;width:400px;text-align:center;transform:scaleX(0.8275862068965517);transform-origin:center 50%;-webkit-text-stroke:0.25px currentColor;top:220.83px;font-size:11.6px;line-height:11.6px;color:#262626;font-weight:normal;">$425.75</div>
<div class="t n" style="left:1.80px;width:400px;text-align:right;transform:scaleX(0.8275862068965517);transform-origin:right 50%;-webkit-text-stroke:0.25px currentColor;top:220.83px;font-size:11.6px;line-height:11.6px;color:#262626;font-weight:normal;">$100.00</div>
<div class="t n" style="left:80.30px;width:400px;text-align:right;transform:scaleX(0.8275862068965517);transform-origin:right 50%;-webkit-text-stroke:0.25px currentColor;top:220.83px;font-size:11.6px;line-height:11.6px;color:#262626;font-weight:normal;">$525.75</div>
<div class="t n" style="left:159.50px;width:400px;text-align:right;transform:scaleX(0.8275862068965517);transform-origin:right 50%;-webkit-text-stroke:0.25px currentColor;top:220.83px;font-size:11.6px;line-height:11.6px;color:#262626;font-weight:normal;">$509.08</div>
<div class="t n" style="left:231.50px;width:400px;text-align:right;transform:scaleX(0.8275862068965517);transform-origin:right 50%;-webkit-text-stroke:0.25px currentColor;top:220.83px;font-size:11.6px;line-height:11.6px;color:#262626;font-weight:normal;">$16.67</div>
<div class="t n" style="left:317.30px;width:400px;text-align:right;transform:scaleX(0.8275862068965517);transform-origin:right 50%;-webkit-text-stroke:0.25px currentColor;top:220.83px;font-size:11.6px;line-height:11.6px;color:#262626;font-weight:normal;">$4,490.92</div>
<div class="t n" style="left:399.50px;width:400px;text-align:right;transform:scaleX(0.8275862068965517);transform-origin:right 50%;-webkit-text-stroke:0.25px currentColor;top:220.83px;font-size:11.6px;line-height:11.6px;color:#262626;font-weight:normal;">$16.67</div>
<div class="t n" style="left:-130.75px;width:400px;text-align:center;transform:scaleX(0.8275862068965517);transform-origin:center 50%;-webkit-text-stroke:0.25px currentColor;top:242.58px;font-size:11.6px;line-height:11.6px;color:#262626;font-weight:normal;">2</div>
<div class="t n" style="left:-61.25px;width:400px;text-align:center;transform:scaleX(0.8275862068965517);transform-origin:center 50%;-webkit-text-stroke:0.25px currentColor;top:242.58px;font-size:11.6px;line-height:11.6px;color:#262626;font-weight:normal;">05-05-2023</div>
<div class="t n" style="left:-156.20px;width:400px;text-align:right;transform:scaleX(0.8275862068965517);transform-origin:right 50%;-webkit-text-stroke:0.25px currentColor;top:242.58px;font-size:11.6px;line-height:11.6px;color:#262626;font-weight:normal;">$4,490.92</div>
<div class="t n" style="left:99.00px;width:400px;text-align:center;transform:scaleX(0.8275862068965517);transform-origin:center 50%;-webkit-text-stroke:0.25px currentColor;top:242.58px;font-size:11.6px;line-height:11.6px;color:#262626;font-weight:normal;">$425.75</div>
<div class="t n" style="left:1.80px;width:400px;text-align:right;transform:scaleX(0.8275862068965517);transform-origin:right 50%;-webkit-text-stroke:0.25px currentColor;top:242.58px;font-size:11.6px;line-height:11.6px;color:#262626;font-weight:normal;">$100.00</div>
<div class="t n" style="left:80.30px;width:400px;text-align:right;transform:scaleX(0.8275862068965517);transform-origin:right 50%;-webkit-text-stroke:0.25px currentColor;top:242.58px;font-size:11.6px;line-height:11.6px;color:#262626;font-weight:normal;">$525.75</div>
<div class="t n" style="left:159.50px;width:400px;text-align:right;transform:scaleX(0.8275862068965517);transform-origin:right 50%;-webkit-text-stroke:0.25px currentColor;top:242.58px;font-size:11.6px;line-height:11.6px;color:#262626;font-weight:normal;">$510.78</div>
<div class="t n" style="left:231.50px;width:400px;text-align:right;transform:scaleX(0.8275862068965517);transform-origin:right 50%;-webkit-text-stroke:0.25px currentColor;top:242.58px;font-size:11.6px;line-height:11.6px;color:#262626;font-weight:normal;">$14.97</div>
<div class="t n" style="left:317.30px;width:400px;text-align:right;transform:scaleX(0.8275862068965517);transform-origin:right 50%;-webkit-text-stroke:0.25px currentColor;top:242.58px;font-size:11.6px;line-height:11.6px;color:#262626;font-weight:normal;">$3,980.14</div>
<div class="t n" style="left:399.50px;width:400px;text-align:right;transform:scaleX(0.8275862068965517);transform-origin:right 50%;-webkit-text-stroke:0.25px currentColor;top:242.58px;font-size:11.6px;line-height:11.6px;color:#262626;font-weight:normal;">$31.64</div>
<div class="t n" style="left:-130.75px;width:400px;text-align:center;transform:scaleX(0.8275862068965517);transform-origin:center 50%;-webkit-text-stroke:0.25px currentColor;top:264.33px;font-size:11.6px;line-height:11.6px;color:#262626;font-weight:normal;">3</div>
<div class="t n" style="left:-61.25px;width:400px;text-align:center;transform:scaleX(0.8275862068965517);transform-origin:center 50%;-webkit-text-stroke:0.25px currentColor;top:264.33px;font-size:11.6px;line-height:11.6px;color:#262626;font-weight:normal;">05-06-2023</div>
<div class="t n" style="left:-156.20px;width:400px;text-align:right;transform:scaleX(0.8275862068965517);transform-origin:right 50%;-webkit-text-stroke:0.25px currentColor;top:264.33px;font-size:11.6px;line-height:11.6px;color:#262626;font-weight:normal;">$3,980.14</div>
<div class="t n" style="left:99.00px;width:400px;text-align:center;transform:scaleX(0.8275862068965517);transform-origin:center 50%;-webkit-text-stroke:0.25px currentColor;top:264.33px;font-size:11.6px;line-height:11.6px;color:#262626;font-weight:normal;">$425.75</div>
<div class="t n" style="left:1.80px;width:400px;text-align:right;transform:scaleX(0.8275862068965517);transform-origin:right 50%;-webkit-text-stroke:0.25px currentColor;top:264.33px;font-size:11.6px;line-height:11.6px;color:#262626;font-weight:normal;">$100.00</div>
<div class="t n" style="left:80.30px;width:400px;text-align:right;transform:scaleX(0.8275862068965517);transform-origin:right 50%;-webkit-text-stroke:0.25px currentColor;top:264.33px;font-size:11.6px;line-height:11.6px;color:#262626;font-weight:normal;">$525.75</div>
<div class="t n" style="left:159.50px;width:400px;text-align:right;transform:scaleX(0.8275862068965517);transform-origin:right 50%;-webkit-text-stroke:0.25px currentColor;top:264.33px;font-size:11.6px;line-height:11.6px;color:#262626;font-weight:normal;">$512.48</div>
<div class="t n" style="left:231.50px;width:400px;text-align:right;transform:scaleX(0.8275862068965517);transform-origin:right 50%;-webkit-text-stroke:0.25px currentColor;top:264.33px;font-size:11.6px;line-height:11.6px;color:#262626;font-weight:normal;">$13.27</div>
<div class="t n" style="left:317.30px;width:400px;text-align:right;transform:scaleX(0.8275862068965517);transform-origin:right 50%;-webkit-text-stroke:0.25px currentColor;top:264.33px;font-size:11.6px;line-height:11.6px;color:#262626;font-weight:normal;">$3,467.65</div>
<div class="t n" style="left:399.50px;width:400px;text-align:right;transform:scaleX(0.8275862068965517);transform-origin:right 50%;-webkit-text-stroke:0.25px currentColor;top:264.33px;font-size:11.6px;line-height:11.6px;color:#262626;font-weight:normal;">$44.90</div>
<div class="t n" style="left:-130.75px;width:400px;text-align:center;transform:scaleX(0.8275862068965517);transform-origin:center 50%;-webkit-text-stroke:0.25px currentColor;top:286.08px;font-size:11.6px;line-height:11.6px;color:#262626;font-weight:normal;">4</div>
<div class="t n" style="left:-61.25px;width:400px;text-align:center;transform:scaleX(0.8275862068965517);transform-origin:center 50%;-webkit-text-stroke:0.25px currentColor;top:286.08px;font-size:11.6px;line-height:11.6px;color:#262626;font-weight:normal;">05-07-2023</div>
<div class="t n" style="left:-156.20px;width:400px;text-align:right;transform:scaleX(0.8275862068965517);transform-origin:right 50%;-webkit-text-stroke:0.25px currentColor;top:286.08px;font-size:11.6px;line-height:11.6px;color:#262626;font-weight:normal;">$3,467.65</div>
<div class="t n" style="left:99.00px;width:400px;text-align:center;transform:scaleX(0.8275862068965517);transform-origin:center 50%;-webkit-text-stroke:0.25px currentColor;top:286.08px;font-size:11.6px;line-height:11.6px;color:#262626;font-weight:normal;">$425.75</div>
<div class="t n" style="left:1.80px;width:400px;text-align:right;transform:scaleX(0.8275862068965517);transform-origin:right 50%;-webkit-text-stroke:0.25px currentColor;top:286.08px;font-size:11.6px;line-height:11.6px;color:#262626;font-weight:normal;">$100.00</div>
<div class="t n" style="left:80.30px;width:400px;text-align:right;transform:scaleX(0.8275862068965517);transform-origin:right 50%;-webkit-text-stroke:0.25px currentColor;top:286.08px;font-size:11.6px;line-height:11.6px;color:#262626;font-weight:normal;">$525.75</div>
<div class="t n" style="left:159.50px;width:400px;text-align:right;transform:scaleX(0.8275862068965517);transform-origin:right 50%;-webkit-text-stroke:0.25px currentColor;top:286.08px;font-size:11.6px;line-height:11.6px;color:#262626;font-weight:normal;">$514.19</div>
<div class="t n" style="left:231.50px;width:400px;text-align:right;transform:scaleX(0.8275862068965517);transform-origin:right 50%;-webkit-text-stroke:0.25px currentColor;top:286.08px;font-size:11.6px;line-height:11.6px;color:#262626;font-weight:normal;">$11.56</div>
<div class="t n" style="left:317.30px;width:400px;text-align:right;transform:scaleX(0.8275862068965517);transform-origin:right 50%;-webkit-text-stroke:0.25px currentColor;top:286.08px;font-size:11.6px;line-height:11.6px;color:#262626;font-weight:normal;">$2,953.46</div>
<div class="t n" style="left:399.50px;width:400px;text-align:right;transform:scaleX(0.8275862068965517);transform-origin:right 50%;-webkit-text-stroke:0.25px currentColor;top:286.08px;font-size:11.6px;line-height:11.6px;color:#262626;font-weight:normal;">$56.46</div>
<div class="t n" style="left:-130.75px;width:400px;text-align:center;transform:scaleX(0.8275862068965517);transform-origin:center 50%;-webkit-text-stroke:0.25px currentColor;top:307.83px;font-size:11.6px;line-height:11.6px;color:#262626;font-weight:normal;">5</div>
<div class="t n" style="left:-61.25px;width:400px;text-align:center;transform:scaleX(0.8275862068965517);transform-origin:center 50%;-webkit-text-stroke:0.25px currentColor;top:307.83px;font-size:11.6px;line-height:11.6px;color:#262626;font-weight:normal;">05-08-2023</div>
<div class="t n" style="left:-156.20px;width:400px;text-align:right;transform:scaleX(0.8275862068965517);transform-origin:right 50%;-webkit-text-stroke:0.25px currentColor;top:307.83px;font-size:11.6px;line-height:11.6px;color:#262626;font-weight:normal;">$2,953.46</div>
<div class="t n" style="left:99.00px;width:400px;text-align:center;transform:scaleX(0.8275862068965517);transform-origin:center 50%;-webkit-text-stroke:0.25px currentColor;top:307.83px;font-size:11.6px;line-height:11.6px;color:#262626;font-weight:normal;">$425.75</div>
<div class="t n" style="left:1.80px;width:400px;text-align:right;transform:scaleX(0.8275862068965517);transform-origin:right 50%;-webkit-text-stroke:0.25px currentColor;top:307.83px;font-size:11.6px;line-height:11.6px;color:#262626;font-weight:normal;">$100.00</div>
<div class="t n" style="left:80.30px;width:400px;text-align:right;transform:scaleX(0.8275862068965517);transform-origin:right 50%;-webkit-text-stroke:0.25px currentColor;top:307.83px;font-size:11.6px;line-height:11.6px;color:#262626;font-weight:normal;">$525.75</div>
<div class="t n" style="left:159.50px;width:400px;text-align:right;transform:scaleX(0.8275862068965517);transform-origin:right 50%;-webkit-text-stroke:0.25px currentColor;top:307.83px;font-size:11.6px;line-height:11.6px;color:#262626;font-weight:normal;">$515.91</div>
<div class="t n" style="left:231.50px;width:400px;text-align:right;transform:scaleX(0.8275862068965517);transform-origin:right 50%;-webkit-text-stroke:0.25px currentColor;top:307.83px;font-size:11.6px;line-height:11.6px;color:#262626;font-weight:normal;">$9.84</div>
<div class="t n" style="left:317.30px;width:400px;text-align:right;transform:scaleX(0.8275862068965517);transform-origin:right 50%;-webkit-text-stroke:0.25px currentColor;top:307.83px;font-size:11.6px;line-height:11.6px;color:#262626;font-weight:normal;">$2,437.56</div>
<div class="t n" style="left:399.50px;width:400px;text-align:right;transform:scaleX(0.8275862068965517);transform-origin:right 50%;-webkit-text-stroke:0.25px currentColor;top:307.83px;font-size:11.6px;line-height:11.6px;color:#262626;font-weight:normal;">$66.31</div>
<div class="t n" style="left:-130.75px;width:400px;text-align:center;transform:scaleX(0.8275862068965517);transform-origin:center 50%;-webkit-text-stroke:0.25px currentColor;top:329.58px;font-size:11.6px;line-height:11.6px;color:#262626;font-weight:normal;">6</div>
<div class="t n" style="left:-61.25px;width:400px;text-align:center;transform:scaleX(0.8275862068965517);transform-origin:center 50%;-webkit-text-stroke:0.25px currentColor;top:329.58px;font-size:11.6px;line-height:11.6px;color:#262626;font-weight:normal;">05-09-2023</div>
<div class="t n" style="left:-156.20px;width:400px;text-align:right;transform:scaleX(0.8275862068965517);transform-origin:right 50%;-webkit-text-stroke:0.25px currentColor;top:329.58px;font-size:11.6px;line-height:11.6px;color:#262626;font-weight:normal;">$2,437.56</div>
<div class="t n" style="left:99.00px;width:400px;text-align:center;transform:scaleX(0.8275862068965517);transform-origin:center 50%;-webkit-text-stroke:0.25px currentColor;top:329.58px;font-size:11.6px;line-height:11.6px;color:#262626;font-weight:normal;">$425.75</div>
<div class="t n" style="left:1.80px;width:400px;text-align:right;transform:scaleX(0.8275862068965517);transform-origin:right 50%;-webkit-text-stroke:0.25px currentColor;top:329.58px;font-size:11.6px;line-height:11.6px;color:#262626;font-weight:normal;">$100.00</div>
<div class="t n" style="left:80.30px;width:400px;text-align:right;transform:scaleX(0.8275862068965517);transform-origin:right 50%;-webkit-text-stroke:0.25px currentColor;top:329.58px;font-size:11.6px;line-height:11.6px;color:#262626;font-weight:normal;">$525.75</div>
<div class="t n" style="left:159.50px;width:400px;text-align:right;transform:scaleX(0.8275862068965517);transform-origin:right 50%;-webkit-text-stroke:0.25px currentColor;top:329.58px;font-size:11.6px;line-height:11.6px;color:#262626;font-weight:normal;">$517.62</div>
<div class="t n" style="left:231.50px;width:400px;text-align:right;transform:scaleX(0.8275862068965517);transform-origin:right 50%;-webkit-text-stroke:0.25px currentColor;top:329.58px;font-size:11.6px;line-height:11.6px;color:#262626;font-weight:normal;">$8.13</div>
<div class="t n" style="left:317.30px;width:400px;text-align:right;transform:scaleX(0.8275862068965517);transform-origin:right 50%;-webkit-text-stroke:0.25px currentColor;top:329.58px;font-size:11.6px;line-height:11.6px;color:#262626;font-weight:normal;">$1,919.94</div>
<div class="t n" style="left:399.50px;width:400px;text-align:right;transform:scaleX(0.8275862068965517);transform-origin:right 50%;-webkit-text-stroke:0.25px currentColor;top:329.58px;font-size:11.6px;line-height:11.6px;color:#262626;font-weight:normal;">$74.43</div>
<div class="t n" style="left:-130.75px;width:400px;text-align:center;transform:scaleX(0.8275862068965517);transform-origin:center 50%;-webkit-text-stroke:0.25px currentColor;top:351.33px;font-size:11.6px;line-height:11.6px;color:#262626;font-weight:normal;">7</div>
<div class="t n" style="left:-61.25px;width:400px;text-align:center;transform:scaleX(0.8275862068965517);transform-origin:center 50%;-webkit-text-stroke:0.25px currentColor;top:351.33px;font-size:11.6px;line-height:11.6px;color:#262626;font-weight:normal;">05-10-2023</div>
<div class="t n" style="left:-156.20px;width:400px;text-align:right;transform:scaleX(0.8275862068965517);transform-origin:right 50%;-webkit-text-stroke:0.25px currentColor;top:351.33px;font-size:11.6px;line-height:11.6px;color:#262626;font-weight:normal;">$1,919.94</div>
<div class="t n" style="left:99.00px;width:400px;text-align:center;transform:scaleX(0.8275862068965517);transform-origin:center 50%;-webkit-text-stroke:0.25px currentColor;top:351.33px;font-size:11.6px;line-height:11.6px;color:#262626;font-weight:normal;">$425.75</div>
<div class="t n" style="left:1.80px;width:400px;text-align:right;transform:scaleX(0.8275862068965517);transform-origin:right 50%;-webkit-text-stroke:0.25px currentColor;top:351.33px;font-size:11.6px;line-height:11.6px;color:#262626;font-weight:normal;">$100.00</div>
<div class="t n" style="left:80.30px;width:400px;text-align:right;transform:scaleX(0.8275862068965517);transform-origin:right 50%;-webkit-text-stroke:0.25px currentColor;top:351.33px;font-size:11.6px;line-height:11.6px;color:#262626;font-weight:normal;">$525.75</div>
<div class="t n" style="left:159.50px;width:400px;text-align:right;transform:scaleX(0.8275862068965517);transform-origin:right 50%;-webkit-text-stroke:0.25px currentColor;top:351.33px;font-size:11.6px;line-height:11.6px;color:#262626;font-weight:normal;">$519.35</div>
<div class="t n" style="left:231.50px;width:400px;text-align:right;transform:scaleX(0.8275862068965517);transform-origin:right 50%;-webkit-text-stroke:0.25px currentColor;top:351.33px;font-size:11.6px;line-height:11.6px;color:#262626;font-weight:normal;">$6.40</div>
<div class="t n" style="left:317.30px;width:400px;text-align:right;transform:scaleX(0.8275862068965517);transform-origin:right 50%;-webkit-text-stroke:0.25px currentColor;top:351.33px;font-size:11.6px;line-height:11.6px;color:#262626;font-weight:normal;">$1,400.59</div>
<div class="t n" style="left:399.50px;width:400px;text-align:right;transform:scaleX(0.8275862068965517);transform-origin:right 50%;-webkit-text-stroke:0.25px currentColor;top:351.33px;font-size:11.6px;line-height:11.6px;color:#262626;font-weight:normal;">$80.83</div>
<div class="t n" style="left:-130.75px;width:400px;text-align:center;transform:scaleX(0.8275862068965517);transform-origin:center 50%;-webkit-text-stroke:0.25px currentColor;top:373.08px;font-size:11.6px;line-height:11.6px;color:#262626;font-weight:normal;">8</div>
<div class="t n" style="left:-61.25px;width:400px;text-align:center;transform:scaleX(0.8275862068965517);transform-origin:center 50%;-webkit-text-stroke:0.25px currentColor;top:373.08px;font-size:11.6px;line-height:11.6px;color:#262626;font-weight:normal;">05-11-2023</div>
<div class="t n" style="left:-156.20px;width:400px;text-align:right;transform:scaleX(0.8275862068965517);transform-origin:right 50%;-webkit-text-stroke:0.25px currentColor;top:373.08px;font-size:11.6px;line-height:11.6px;color:#262626;font-weight:normal;">$1,400.59</div>
<div class="t n" style="left:99.00px;width:400px;text-align:center;transform:scaleX(0.8275862068965517);transform-origin:center 50%;-webkit-text-stroke:0.25px currentColor;top:373.08px;font-size:11.6px;line-height:11.6px;color:#262626;font-weight:normal;">$425.75</div>
<div class="t n" style="left:1.80px;width:400px;text-align:right;transform:scaleX(0.8275862068965517);transform-origin:right 50%;-webkit-text-stroke:0.25px currentColor;top:373.08px;font-size:11.6px;line-height:11.6px;color:#262626;font-weight:normal;">$100.00</div>
<div class="t n" style="left:80.30px;width:400px;text-align:right;transform:scaleX(0.8275862068965517);transform-origin:right 50%;-webkit-text-stroke:0.25px currentColor;top:373.08px;font-size:11.6px;line-height:11.6px;color:#262626;font-weight:normal;">$525.75</div>
<div class="t n" style="left:159.50px;width:400px;text-align:right;transform:scaleX(0.8275862068965517);transform-origin:right 50%;-webkit-text-stroke:0.25px currentColor;top:373.08px;font-size:11.6px;line-height:11.6px;color:#262626;font-weight:normal;">$521.08</div>
<div class="t n" style="left:231.50px;width:400px;text-align:right;transform:scaleX(0.8275862068965517);transform-origin:right 50%;-webkit-text-stroke:0.25px currentColor;top:373.08px;font-size:11.6px;line-height:11.6px;color:#262626;font-weight:normal;">$4.67</div>
<div class="t n" style="left:317.30px;width:400px;text-align:right;transform:scaleX(0.8275862068965517);transform-origin:right 50%;-webkit-text-stroke:0.25px currentColor;top:373.08px;font-size:11.6px;line-height:11.6px;color:#262626;font-weight:normal;">$879.50</div>
<div class="t n" style="left:399.50px;width:400px;text-align:right;transform:scaleX(0.8275862068965517);transform-origin:right 50%;-webkit-text-stroke:0.25px currentColor;top:373.08px;font-size:11.6px;line-height:11.6px;color:#262626;font-weight:normal;">$85.50</div>
<div class="t n" style="left:-130.75px;width:400px;text-align:center;transform:scaleX(0.8275862068965517);transform-origin:center 50%;-webkit-text-stroke:0.25px currentColor;top:394.83px;font-size:11.6px;line-height:11.6px;color:#262626;font-weight:normal;">9</div>
<div class="t n" style="left:-61.25px;width:400px;text-align:center;transform:scaleX(0.8275862068965517);transform-origin:center 50%;-webkit-text-stroke:0.25px currentColor;top:394.83px;font-size:11.6px;line-height:11.6px;color:#262626;font-weight:normal;">05-12-2023</div>
<div class="t n" style="left:-156.20px;width:400px;text-align:right;transform:scaleX(0.8275862068965517);transform-origin:right 50%;-webkit-text-stroke:0.25px currentColor;top:394.83px;font-size:11.6px;line-height:11.6px;color:#262626;font-weight:normal;">$879.50</div>
<div class="t n" style="left:99.00px;width:400px;text-align:center;transform:scaleX(0.8275862068965517);transform-origin:center 50%;-webkit-text-stroke:0.25px currentColor;top:394.83px;font-size:11.6px;line-height:11.6px;color:#262626;font-weight:normal;">$425.75</div>
<div class="t n" style="left:1.80px;width:400px;text-align:right;transform:scaleX(0.8275862068965517);transform-origin:right 50%;-webkit-text-stroke:0.25px currentColor;top:394.83px;font-size:11.6px;line-height:11.6px;color:#262626;font-weight:normal;">$100.00</div>
<div class="t n" style="left:80.30px;width:400px;text-align:right;transform:scaleX(0.8275862068965517);transform-origin:right 50%;-webkit-text-stroke:0.25px currentColor;top:394.83px;font-size:11.6px;line-height:11.6px;color:#262626;font-weight:normal;">$525.75</div>
<div class="t n" style="left:159.50px;width:400px;text-align:right;transform:scaleX(0.8275862068965517);transform-origin:right 50%;-webkit-text-stroke:0.25px currentColor;top:394.83px;font-size:11.6px;line-height:11.6px;color:#262626;font-weight:normal;">$522.82</div>
<div class="t n" style="left:231.50px;width:400px;text-align:right;transform:scaleX(0.8275862068965517);transform-origin:right 50%;-webkit-text-stroke:0.25px currentColor;top:394.83px;font-size:11.6px;line-height:11.6px;color:#262626;font-weight:normal;">$2.93</div>
<div class="t n" style="left:317.30px;width:400px;text-align:right;transform:scaleX(0.8275862068965517);transform-origin:right 50%;-webkit-text-stroke:0.25px currentColor;top:394.83px;font-size:11.6px;line-height:11.6px;color:#262626;font-weight:normal;">$356.69</div>
<div class="t n" style="left:399.50px;width:400px;text-align:right;transform:scaleX(0.8275862068965517);transform-origin:right 50%;-webkit-text-stroke:0.25px currentColor;top:394.83px;font-size:11.6px;line-height:11.6px;color:#262626;font-weight:normal;">$88.43</div>
<div class="t n" style="left:-130.75px;width:400px;text-align:center;transform:scaleX(0.8275862068965517);transform-origin:center 50%;-webkit-text-stroke:0.25px currentColor;top:416.58px;font-size:11.6px;line-height:11.6px;color:#262626;font-weight:normal;">10</div>
<div class="t n" style="left:-61.25px;width:400px;text-align:center;transform:scaleX(0.8275862068965517);transform-origin:center 50%;-webkit-text-stroke:0.25px currentColor;top:416.58px;font-size:11.6px;line-height:11.6px;color:#262626;font-weight:normal;">05-01-2024</div>
<div class="t n" style="left:-156.20px;width:400px;text-align:right;transform:scaleX(0.8275862068965517);transform-origin:right 50%;-webkit-text-stroke:0.25px currentColor;top:416.58px;font-size:11.6px;line-height:11.6px;color:#262626;font-weight:normal;">$356.69</div>
<div class="t n" style="left:99.00px;width:400px;text-align:center;transform:scaleX(0.8275862068965517);transform-origin:center 50%;-webkit-text-stroke:0.25px currentColor;top:416.58px;font-size:11.6px;line-height:11.6px;color:#262626;font-weight:normal;">$425.75</div>
<div class="t n" style="left:1.80px;width:400px;text-align:right;transform:scaleX(0.8275862068965517);transform-origin:right 50%;-webkit-text-stroke:0.25px currentColor;top:416.58px;font-size:11.6px;line-height:11.6px;color:#262626;font-weight:normal;">$0.00</div>
<div class="t n" style="left:80.30px;width:400px;text-align:right;transform:scaleX(0.8275862068965517);transform-origin:right 50%;-webkit-text-stroke:0.25px currentColor;top:416.58px;font-size:11.6px;line-height:11.6px;color:#262626;font-weight:normal;">$356.69</div>
<div class="t n" style="left:159.50px;width:400px;text-align:right;transform:scaleX(0.8275862068965517);transform-origin:right 50%;-webkit-text-stroke:0.25px currentColor;top:416.58px;font-size:11.6px;line-height:11.6px;color:#262626;font-weight:normal;">$355.50</div>
<div class="t n" style="left:231.50px;width:400px;text-align:right;transform:scaleX(0.8275862068965517);transform-origin:right 50%;-webkit-text-stroke:0.25px currentColor;top:416.58px;font-size:11.6px;line-height:11.6px;color:#262626;font-weight:normal;">$1.19</div>
<div class="t n" style="left:317.30px;width:400px;text-align:right;transform:scaleX(0.8275862068965517);transform-origin:right 50%;-webkit-text-stroke:0.25px currentColor;top:416.58px;font-size:11.6px;line-height:11.6px;color:#262626;font-weight:normal;">$0.00</div>
<div class="t n" style="left:399.50px;width:400px;text-align:right;transform:scaleX(0.8275862068965517);transform-origin:right 50%;-webkit-text-stroke:0.25px currentColor;top:416.58px;font-size:11.6px;line-height:11.6px;color:#262626;font-weight:normal;">$89.62</div>
<div class="r" style="left:1007px;top:159px;width:17px;height:342px;background:#e6e6e6;box-sizing:border-box;border-left:2px solid #c8c8c8"></div>
<div class="r" style="left:1009px;top:172px;width:14px;height:316px;background:#f0f0f0;box-sizing:border-box;border-right:1px solid #d0d0d0"></div>
<div class="r" style="left:1009.5px;top:160px;width:13.0px;height:12px;background:#fff;box-sizing:border-box;border:1px solid #cfcfcf"></div>
<svg class="s" style="left:1012px;top:163px;" width="9" height="6" viewBox="0 0 9 6"><path d="M1 5 h7 l-3.5 -4z" fill="#222"/></svg>
<div class="r" style="left:1009.5px;top:313px;width:13.0px;height:175px;background:#fff;box-sizing:border-box;border:1px solid #c8c8c8"></div>
<div class="r" style="left:1009.5px;top:488.5px;width:12.5px;height:12.5px;background:#fff;box-sizing:border-box;border:1px solid #cfcfcf"></div>
<svg class="s" style="left:1011.5px;top:492px;" width="9" height="6" viewBox="0 0 9 6"><path d="M1 1 h7 l-3.5 4z" fill="#222"/></svg>
<div class="r" style="left:0px;top:500px;width:1024px;height:18.299999999999955px;background:#e6e6e6;box-sizing:border-box;border-top:1px solid #c6c6c6"></div>
<svg class="s" style="left:14px;top:504px;" width="26" height="10" viewBox="0 0 26 10"><path d="M4.5 2 l-2.3 3 l2.3 3" fill="none" stroke="#c4c4c4" stroke-width="1"/><path d="M20.5 2 l2.3 3 l-2.3 3" fill="none" stroke="#a8a8a8" stroke-width="1"/></svg>
<div class="r" style="left:63.5px;top:500px;width:84.5px;height:17.5px;background:linear-gradient(#ffffff 0%,#f8fbf9 50%,#c5ddcc 100%);border-bottom:1.2px solid #5a9c74;box-sizing:border-box;box-shadow:0.5px 0 0 #cfcfcf,-0.5px 0 0 #cfcfcf"></div>
<div class="t" style="left:70.00px;top:503.65px;font-size:10.1px;line-height:10.1px;color:#217346;font-weight:bold;">Loan Schedule</div>
<svg class="s" style="left:168px;top:502px;" width="14" height="14" viewBox="0 0 14 14"><circle cx="7" cy="7" r="5.6" fill="none" stroke="#666" stroke-width="1"/><path d="M7 4 v6 M4 7 h6" stroke="#666" stroke-width="1"/></svg>
<svg class="s" style="left:611.2px;top:502px;" width="4" height="14" viewBox="0 0 4 14"><circle cx="2" cy="3" r="0.7" fill="#aaa"/><circle cx="2" cy="7" r="0.7" fill="#aaa"/><circle cx="2" cy="11" r="0.7" fill="#aaa"/></svg>
<div class="r" style="left:623.5px;top:502.5px;width:347.5px;height:13.0px;background:#fff;box-sizing:border-box;border:1px solid #c6c6c6"></div>
<div class="r" style="left:623.5px;top:502.5px;width:13.0px;height:13.0px;background:#fff;box-sizing:border-box;border:1px solid #c6c6c6"></div>
<svg class="s" style="left:626px;top:505px;" width="9" height="8" viewBox="0 0 9 8"><path d="M5.5 1 v6 l-4 -3z" fill="#222"/></svg>
<div class="r" style="left:995.5px;top:502.5px;width:13.0px;height:13.0px;background:#fff;box-sizing:border-box;border:1px solid #c6c6c6"></div>
<svg class="s" style="left:998px;top:505px;" width="9" height="8" viewBox="0 0 9 8"><path d="M3.5 1 v6 l4 -3z" fill="#222"/></svg>
<div class="r" style="left:0px;top:518.3px;width:1024px;height:14.700000000000045px;background:#f3f3f3;"></div>
<div class="t n" style="left:5.90px;top:523.43px;font-size:8.0px;line-height:8.0px;color:#444;font-weight:normal;">Ready</div>
<div class="t n" style="left:40.00px;top:523.34px;font-size:8.1px;line-height:8.1px;color:#444;font-weight:normal;">Calculate</div>
<svg class="s" style="left:88px;top:519px;" width="14" height="14" viewBox="0 0 14 14"><path d="M7 2.5 a4.5 4.5 0 1 0 3.5 7.5" fill="none" stroke="#555" stroke-width="1"/><path d="M8 8 l4 4 M12 8 l-4 4" stroke="#555" stroke-width="1"/><path d="M10 4 h3 M11.5 2.5 v3" stroke="#555" stroke-width="0.9"/></svg>
<div class="t n" style="left:103.00px;top:523.34px;font-size:8.1px;line-height:8.1px;color:#444;font-weight:normal;">Accessibility: Investigate</div>
<div class="t n" style="left:601.00px;top:523.34px;font-size:8.1px;line-height:8.1px;color:#444;font-weight:normal;">Average: 5164</div>
<div class="t n" style="left:671.00px;top:523.34px;font-size:8.1px;line-height:8.1px;color:#444;font-weight:normal;">Count: 100</div>
<div class="t n" style="left:723.50px;top:523.34px;font-size:8.1px;line-height:8.1px;color:#444;font-weight:normal;">Sum: 516380</div>
<div class="r" style="left:787px;top:518.3px;width:31.700000000000045px;height:13.200000000000045px;background:#d4d4d4;"></div>
<svg class="s" style="left:790px;top:519px;" width="200" height="13" viewBox="0 0 200 13"><rect x="7.9" y="3" width="10" height="10" fill="none" stroke="#7a7a7a" stroke-width="0.9"/><path d="M7.9 6.3 h10 M7.9 9.6 h10 M11.2 3 v10 M14.5 3 v10" stroke="#7a7a7a" stroke-width="0.8"/><rect x="39.7" y="3" width="10" height="10" rx="1" fill="none" stroke="#999" stroke-width="0.9"/><path d="M42.5 4.5 v7 M47 4.5 v7" stroke="#aaa" stroke-width="0.7"/><path d="M44.8 5 v6" stroke="#888" stroke-width="0.8"/><path d="M71.6 3 v10 h10 v-10 z M71.6 9.5 h6.5 v-6.5 M75 3 v6.5" fill="none" stroke="#888" stroke-width="0.9"/><path d="M97 8.5 h5" stroke="#666" stroke-width="0.9"/><path d="M108 8.5 h79" stroke="#444" stroke-width="0.9"/><rect x="139.5" y="3" width="4" height="10" fill="#444"/><rect x="147" y="6" width="1" height="5" fill="#444"/><path d="M190.5 8.5 h6 M193.5 5.5 v6" stroke="#666" stroke-width="0.9"/></svg>
<div class="t n" style="left:996.00px;top:523.34px;font-size:8.1px;line-height:8.1px;color:#444;font-weight:normal;">85%</div>
<div class="r" style="left:0px;top:530.4px;width:1024px;height:1.2000000000000455px;background:#fbfbfb;"></div>
<div class="r" style="left:0px;top:531.6px;width:1024px;height:1.3999999999999773px;background:#7aac8f;"></div>
<div class="r" style="left:411.7px;top:72.5px;width:179.00000000000006px;height:273.5px;background:#fff;box-shadow:0 1.5px 5px rgba(0,0,0,0.22);border-radius:3px 3px 0 0;overflow:hidden"></div>
<div class="r" style="left:411.7px;top:72.5px;width:179.00000000000006px;height:17.700000000000003px;background:#e9e9e9;border-radius:3px 3px 0 0"></div>
<div class="t" style="left:418.30px;top:76.60px;font-size:9.45px;line-height:9.45px;color:#505050;font-weight:bold;">2-D Column</div>
<div class="r" style="left:411.7px;top:135.9px;width:179.00000000000006px;height:18.099999999999994px;background:#e9e9e9;"></div>
<div class="t" style="left:418.30px;top:140.40px;font-size:9.45px;line-height:9.45px;color:#505050;font-weight:bold;">3-D Column</div>
<div class="r" style="left:411.7px;top:199.2px;width:179.00000000000006px;height:17.80000000000001px;background:#e9e9e9;"></div>
<div class="t" style="left:418.30px;top:203.40px;font-size:9.45px;line-height:9.45px;color:#505050;font-weight:bold;">2-D Bar</div>
<div class="r" style="left:411.7px;top:262.1px;width:179.00000000000006px;height:18.19999999999999px;background:#e9e9e9;"></div>
<div class="t" style="left:418.30px;top:266.70px;font-size:9.45px;line-height:9.45px;color:#505050;font-weight:bold;">3-D Bar</div>
<div class="r" style="left:411.7px;top:325px;width:179.00000000000006px;height:1px;background:#e3e3e3;"></div>
<div class="t n" style="left:437.30px;top:332.53px;font-size:9.3px;line-height:9.3px;color:#6a6a6a;font-weight:normal;"><u>M</u>ore Column Charts...</div>
<svg class="s" style="left:414px;top:329px;" width="15" height="14" viewBox="0 0 15 14"><path d="M1.5 1 v12 h11" fill="none" stroke="#8a8a8a" stroke-width="0.8"/><rect x="3.5" y="4.5" width="2.5" height="8.5" fill="#e0e0e0" stroke="#9a9a9a" stroke-width="0.6"/><rect x="6.5" y="8" width="2.5" height="5" fill="#d0d0d0" stroke="#9a9a9a" stroke-width="0.6"/><rect x="9.5" y="2" width="2.5" height="11" fill="#8a8a8a" stroke="#777" stroke-width="0.6"/></svg>
<svg class="s" style="left:411.7px;top:72.5px;" width="179.00000000000006" height="273.5" viewBox="0 0 179.00000000000006 273.5"><g transform="translate(6.300000000000011,25.799999999999997)"><path d="M0.5 0 V29 H31" fill="none" stroke="#8c8c8c" stroke-width="0.9"/><rect x="3" y="13" width="6.3" height="16" fill="#fff" stroke="#808080" stroke-width="0.8"/><rect x="9.3" y="4.6" width="6.3" height="24.4" fill="#d9d9d9" stroke="#808080" stroke-width="0.8"/><rect x="17.4" y="7.6" width="6.2" height="21.4" fill="#fff" stroke="#808080" stroke-width="0.8"/><rect x="23.6" y="13" width="6" height="16" fill="#d9d9d9" stroke="#808080" stroke-width="0.8"/></g><g transform="translate(51.0,25.799999999999997)"><path d="M0.5 0 V29 H31" fill="none" stroke="#8c8c8c" stroke-width="0.9"/><rect x="5.6" y="6.7" width="8.4" height="13.5" fill="#d9d9d9" stroke="#808080" stroke-width="0.8"/><rect x="5.6" y="20.2" width="8.4" height="8.8" fill="#fff" stroke="#808080" stroke-width="0.8"/><rect x="19.4" y="2" width="8.1" height="13.9" fill="#d9d9d9" stroke="#808080" stroke-width="0.8"/><rect x="19.4" y="15.9" width="8.1" height="13.1" fill="#fff" stroke="#808080" stroke-width="0.8"/></g><g transform="translate(95.80000000000001,25.799999999999997)"><path d="M0.5 0 V29 H31" fill="none" stroke="#8c8c8c" stroke-width="0.9"/><rect x="5.6" y="2" width="8.4" height="18.2" fill="#d9d9d9" stroke="#808080" stroke-width="0.8"/><rect x="5.6" y="20.2" width="8.4" height="8.8" fill="#fff" stroke="#808080" stroke-width="0.8"/><rect x="19.4" y="2" width="8.1" height="13.9" fill="#d9d9d9" stroke="#808080" stroke-width="0.8"/><rect x="19.4" y="15.9" width="8.1" height="13.1" fill="#fff" stroke="#808080" stroke-width="0.8"/></g><g transform="translate(5.800000000000011,89.0)"><path d="M5 0 V21 L0.5 26 M5 21 H34" fill="none" stroke="#8c8c8c" stroke-width="0.8"/><path d="M7 14.5 l2.5 -2.5 h5 l-2.5 2.5z" fill="#fff" stroke="#808080" stroke-width="0.7"/><path d="M12 14.5 l2.5 -2.5 v14 l-2.5 2.5z" fill="#fff" stroke="#808080" stroke-width="0.7"/><rect x="7" y="14.5" width="5" height="14" fill="#fff" stroke="#808080" stroke-width="0.7"/><path d="M12 6.5 l2.5 -2.5 h5 l-2.5 2.5z" fill="#fff" stroke="#808080" stroke-width="0.7"/><path d="M17 6.5 l2.5 -2.5 v22 l-2.5 2.5z" fill="#d9d9d9" stroke="#808080" stroke-width="0.7"/><rect x="12" y="6.5" width="5" height="22" fill="#d9d9d9" stroke="#808080" stroke-width="0.7"/><path d="M20.5 9 l2.5 -2.5 h5 l-2.5 2.5z" fill="#fff" stroke="#808080" stroke-width="0.7"/><path d="M25.5 9 l2.5 -2.5 v19.5 l-2.5 2.5z" fill="#fff" stroke="#808080" stroke-width="0.7"/><rect x="20.5" y="9" width="5" height="19.5" fill="#fff" stroke="#808080" stroke-width="0.7"/><path d="M25 12.8 l2.5 -2.5 h5 l-2.5 2.5z" fill="#fff" stroke="#808080" stroke-width="0.7"/><path d="M30 12.8 l2.5 -2.5 v15.7 l-2.5 2.5z" fill="#d9d9d9" stroke="#808080" stroke-width="0.7"/><rect x="25" y="12.8" width="5" height="15.7" fill="#d9d9d9" stroke="#808080" stroke-width="0.7"/></g><g transform="translate(50.60000000000002,89.0)"><path d="M5 0 V21 L0.5 26 M5 21 H34" fill="none" stroke="#8c8c8c" stroke-width="0.8"/><path d="M8 9 l3 -3 h7 l-3 3z" fill="#fff" stroke="#808080" stroke-width="0.7"/><path d="M15 9 l3 -3 v20 l-3 3z" fill="#d9d9d9" stroke="#808080" stroke-width="0.7"/><rect x="8" y="9" width="7" height="12" fill="#d9d9d9" stroke="#808080" stroke-width="0.7"/><rect x="8" y="21" width="7" height="8" fill="#fff" stroke="#808080" stroke-width="0.7"/><path d="M20 3 l3 -3 h7 l-3 3z" fill="#fff" stroke="#808080" stroke-width="0.7"/><path d="M27 3 l3 -3 v26 l-3 3z" fill="#d9d9d9" stroke="#808080" stroke-width="0.7"/><rect x="20" y="3" width="7" height="12" fill="#d9d9d9" stroke="#808080" stroke-width="0.7"/><rect x="20" y="15" width="7" height="14" fill="#fff" stroke="#808080" stroke-width="0.7"/></g><g transform="translate(95.40000000000003,89.0)"><path d="M5 0 V21 L0.5 26 M5 21 H34" fill="none" stroke="#8c8c8c" stroke-width="0.8"/><path d="M8 3 l3 -3 h7 l-3 3z" fill="#fff" stroke="#808080" stroke-width="0.7"/><path d="M15 3 l3 -3 v26 l-3 3z" fill="#d9d9d9" stroke="#808080" stroke-width="0.7"/><rect x="8" y="3" width="7" height="17" fill="#d9d9d9" stroke="#808080" stroke-width="0.7"/><rect x="8" y="20" width="7" height="9" fill="#fff" stroke="#808080" stroke-width="0.7"/><path d="M20 3 l3 -3 h7 l-3 3z" fill="#fff" stroke="#808080" stroke-width="0.7"/><path d="M27 3 l3 -3 v26 l-3 3z" fill="#d9d9d9" stroke="#808080" stroke-width="0.7"/><rect x="20" y="3" width="7" height="12" fill="#d9d9d9" stroke="#808080" stroke-width="0.7"/><rect x="20" y="15" width="7" height="14" fill="#fff" stroke="#808080" stroke-width="0.7"/></g><g transform="translate(140.2,89.0)"><path d="M5 0 V21 L0.5 26 M5 21 H34" fill="none" stroke="#8c8c8c" stroke-width="0.8"/><path d="M11 4.2 l2.5 -2.5 h5 l-2.5 2.5z" fill="#fff" stroke="#808080" stroke-width="0.7"/><path d="M16 4.2 l2.5 -2.5 v21.5 l-2.5 2.5z" fill="#d9d9d9" stroke="#808080" stroke-width="0.7"/><rect x="11" y="4.2" width="5" height="21.5" fill="#d9d9d9" stroke="#808080" stroke-width="0.7"/><path d="M24.5 3.7 l2.5 -2.5 h5 l-2.5 2.5z" fill="#fff" stroke="#808080" stroke-width="0.7"/><path d="M29.5 3.7 l2.5 -2.5 v22 l-2.5 2.5z" fill="#d9d9d9" stroke="#808080" stroke-width="0.7"/><rect x="24.5" y="3.7" width="5" height="22" fill="#d9d9d9" stroke="#808080" stroke-width="0.7"/><path d="M6.3 14.5 l2.5 -2.5 h5 l-2.5 2.5z" fill="#fff" stroke="#808080" stroke-width="0.7"/><path d="M11.3 14.5 l2.5 -2.5 v14 l-2.5 2.5z" fill="#fff" stroke="#808080" stroke-width="0.7"/><rect x="6.3" y="14.5" width="5" height="14" fill="#fff" stroke="#808080" stroke-width="0.7"/><path d="M19.1 8.5 l2.5 -2.5 h5 l-2.5 2.5z" fill="#fff" stroke="#808080" stroke-width="0.7"/><path d="M24.1 8.5 l2.5 -2.5 v20 l-2.5 2.5z" fill="#fff" stroke="#808080" stroke-width="0.7"/><rect x="19.1" y="8.5" width="5" height="20" fill="#fff" stroke="#808080" stroke-width="0.7"/></g><g transform="translate(6.300000000000011,152.3)"><path d="M0.5 0 V29.5 H32" fill="none" stroke="#8c8c8c" stroke-width="0.9"/><rect x="0.5" y="1.3" width="16" height="5.7" fill="#fff" stroke="#808080" stroke-width="0.8"/><rect x="0.5" y="7" width="24" height="5.8" fill="#d9d9d9" stroke="#808080" stroke-width="0.8"/><rect x="0.5" y="12.8" width="21.3" height="8.2" fill="#fff" stroke="#808080" stroke-width="0.8"/><rect x="0.5" y="21" width="16" height="5.7" fill="#d9d9d9" stroke="#808080" stroke-width="0.8"/></g><g transform="translate(51.30000000000001,152.3)"><path d="M0.5 0 V29.5 H32" fill="none" stroke="#8c8c8c" stroke-width="0.9"/><rect x="0.5" y="4" width="7.9" height="7.8" fill="#fff" stroke="#808080" stroke-width="0.8"/><rect x="8.4" y="4" width="14" height="7.8" fill="#d9d9d9" stroke="#808080" stroke-width="0.8"/><rect x="0.5" y="17.5" width="13.1" height="7.9" fill="#fff" stroke="#808080" stroke-width="0.8"/><rect x="13.6" y="17.5" width="14.1" height="7.9" fill="#d9d9d9" stroke="#808080" stroke-width="0.8"/></g><g transform="translate(96.30000000000001,152.3)"><path d="M0.5 0 V29.5 H32" fill="none" stroke="#8c8c8c" stroke-width="0.9"/><rect x="0.5" y="4" width="7" height="7.8" fill="#fff" stroke="#808080" stroke-width="0.8"/><rect x="7.5" y="4" width="20.5" height="7.8" fill="#d9d9d9" stroke="#808080" stroke-width="0.8"/><rect x="0.5" y="17.5" width="13.1" height="7.9" fill="#fff" stroke="#808080" stroke-width="0.8"/><rect x="13.6" y="17.5" width="14.4" height="7.9" fill="#d9d9d9" stroke="#808080" stroke-width="0.8"/></g><g transform="translate(6.300000000000011,215.89999999999998)"><path d="M5 0 V26.8 L0.1 32 M5 26.8 H32" fill="none" stroke="#8c8c8c" stroke-width="0.8"/><path d="M1.3 7.3 l2.2 -2.2 h21.8 l-2.2 2.2z" fill="#fff" stroke="#808080" stroke-width="0.7"/><path d="M23.1 7.3 l2.2 -2.2 v4.8 l-2.2 2.2z" fill="#d9d9d9" stroke="#808080" stroke-width="0.7"/><rect x="1.3" y="7.3" width="21.8" height="4.8" fill="#d9d9d9" stroke="#808080" stroke-width="0.7"/><path d="M1.3 3.1 l2.2 -2.2 h13.9 l-2.2 2.2z" fill="#fff" stroke="#808080" stroke-width="0.7"/><path d="M15.200000000000001 3.1 l2.2 -2.2 v4.2 l-2.2 2.2z" fill="#d9d9d9" stroke="#808080" stroke-width="0.7"/><rect x="1.3" y="3.1" width="13.9" height="4.2" fill="#fff" stroke="#808080" stroke-width="0.7"/><path d="M1.3 20.8 l2.2 -2.2 h15.7 l-2.2 2.2z" fill="#fff" stroke="#808080" stroke-width="0.7"/><path d="M17.0 20.8 l2.2 -2.2 v4.5 l-2.2 2.2z" fill="#d9d9d9" stroke="#808080" stroke-width="0.7"/><rect x="1.3" y="20.8" width="15.7" height="4.5" fill="#d9d9d9" stroke="#808080" stroke-width="0.7"/><path d="M1.3 15.5 l2.2 -2.2 h19.5 l-2.2 2.2z" fill="#fff" stroke="#808080" stroke-width="0.7"/><path d="M20.8 15.5 l2.2 -2.2 v5.3 l-2.2 2.2z" fill="#d9d9d9" stroke="#808080" stroke-width="0.7"/><rect x="1.3" y="15.5" width="19.5" height="5.3" fill="#fff" stroke="#808080" stroke-width="0.7"/></g><g transform="translate(51.30000000000001,215.89999999999998)"><path d="M5 0 V26.8 L0.1 32 M5 26.8 H32" fill="none" stroke="#8c8c8c" stroke-width="0.8"/><path d="M1.2 6.1 l3 -3 h18.8 l-3 3z" fill="#fff" stroke="#808080" stroke-width="0.7"/><path d="M20.0 6.1 l3 -3 v6.2 l-3 3z" fill="#d9d9d9" stroke="#808080" stroke-width="0.7"/><rect x="1.2" y="6.1" width="6.1" height="6.2" fill="#fff" stroke="#808080" stroke-width="0.7"/><rect x="7.3" y="6.1" width="12.7" height="6.2" fill="#d9d9d9" stroke="#808080" stroke-width="0.7"/><path d="M1.2 18 l3 -3 h24.6 l-3 3z" fill="#fff" stroke="#808080" stroke-width="0.7"/><path d="M25.8 18 l3 -3 v7 l-3 3z" fill="#d9d9d9" stroke="#808080" stroke-width="0.7"/><rect x="1.2" y="18" width="12.3" height="7" fill="#fff" stroke="#808080" stroke-width="0.7"/><rect x="13.5" y="18" width="12.3" height="7" fill="#d9d9d9" stroke="#808080" stroke-width="0.7"/></g><g transform="translate(96.30000000000001,215.89999999999998)"><path d="M5 0 V26.8 L0.1 32 M5 26.8 H32" fill="none" stroke="#8c8c8c" stroke-width="0.8"/><path d="M1.2 6.1 l3 -3 h24.6 l-3 3z" fill="#fff" stroke="#808080" stroke-width="0.7"/><path d="M25.8 6.1 l3 -3 v6.2 l-3 3z" fill="#d9d9d9" stroke="#808080" stroke-width="0.7"/><rect x="1.2" y="6.1" width="6.1" height="6.2" fill="#fff" stroke="#808080" stroke-width="0.7"/><rect x="7.3" y="6.1" width="18.5" height="6.2" fill="#d9d9d9" stroke="#808080" stroke-width="0.7"/><path d="M1.2 18 l3 -3 h24.6 l-3 3z" fill="#fff" stroke="#808080" stroke-width="0.7"/><path d="M25.8 18 l3 -3 v7 l-3 3z" fill="#d9d9d9" stroke="#808080" stroke-width="0.7"/><rect x="1.2" y="18" width="12.3" height="7" fill="#fff" stroke="#808080" stroke-width="0.7"/><rect x="13.5" y="18" width="12.3" height="7" fill="#d9d9d9" stroke="#808080" stroke-width="0.7"/></g></svg>
<div class="r" style="left:411.2px;top:72.0px;width:179.00000000000006px;height:273.5px;border:1px solid rgba(0,0,0,0.12);border-radius:3px 3px 0 0"></div>
<svg class="s" style="left:355px;top:0px;" width="80" height="70" viewBox="0 0 80 70"><path d="M13.7 18.1 L40.9 43.3 L35.0 49.6 L64.5 57.7 L54.3 28.8 L48.5 35.1 L21.3 9.9 A5.6 5.6 0 0 0 13.7 18.1 Z" fill="#f7c614" stroke="#000" stroke-width="3.2" stroke-linejoin="miter"/></svg>
</body></html>
